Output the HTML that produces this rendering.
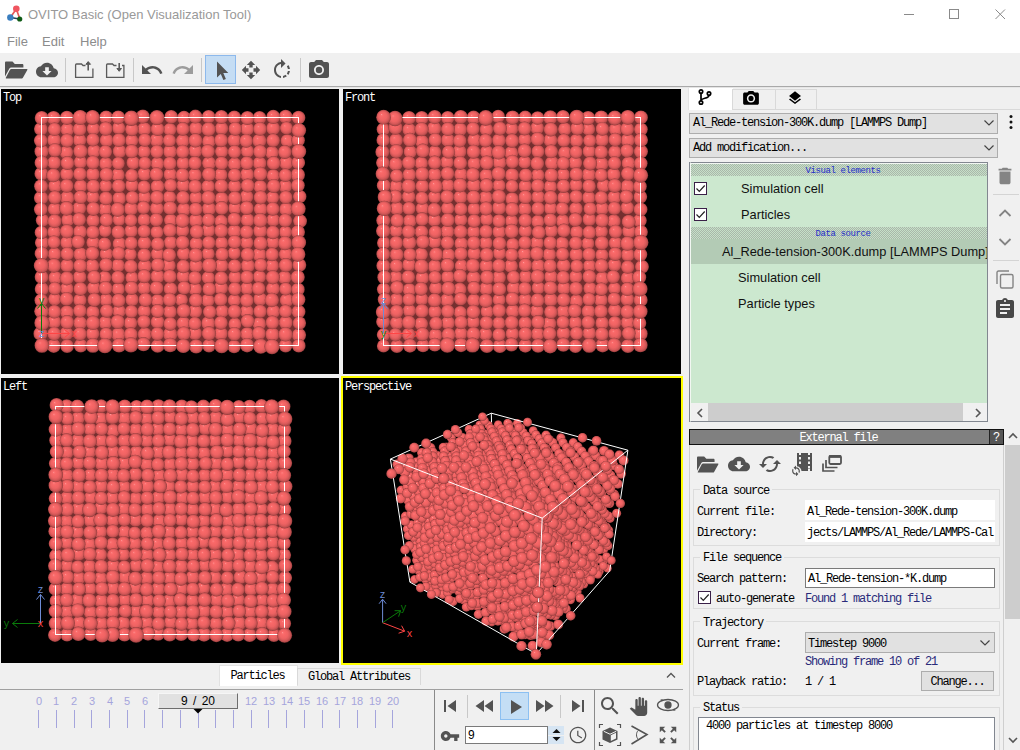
<!DOCTYPE html>
<html><head><meta charset="utf-8"><title>OVITO</title>
<style>
*{box-sizing:border-box;margin:0;padding:0}
html,body{width:1020px;height:750px;overflow:hidden;background:#f0f0f0;font-family:"Liberation Sans",sans-serif;font-size:13px;color:#000}
.a{position:absolute}
.mono{font-family:"Liberation Mono",monospace;font-size:12px;letter-spacing:-1.2px;white-space:pre;line-height:12px}
.ic{position:absolute;fill:#535353}
.vp{position:absolute;background:#000;overflow:hidden}
.vl{position:absolute;left:2px;top:3px;color:#fff}
.sep{position:absolute;width:1px;background:#c8c8c8}
.grp{position:absolute;border:1px solid #dcdcdc}
.lbl{position:absolute;background:#f0f0f0;padding:0 3px}
.tk{position:absolute;width:1px;height:18px;top:710px;background:#a5a5dc}
.tn{position:absolute;top:695px;width:20px;text-align:center;color:#a5a5dc;font-size:11px;line-height:12px}
</style></head><body>
<!-- title + menu -->
<div class="a" style="left:0;top:0;width:1020px;height:53px;background:#fff"></div>
<svg class="a" style="left:6px;top:5px" width="18" height="18" viewBox="0 0 18 18">
<path d="M10.300 4L4.500 12.300M10.300 4L13.700 13.500" stroke="#e25a5a" stroke-width="1.700" fill="none"/><path d="M4.500 12.500L13.500 14" stroke="#24405a" stroke-width="1.700" fill="none"/>
<circle cx="10.300" cy="3.700" r="3.300" fill="#f05560"/><circle cx="4.300" cy="12.500" r="3.200" fill="#3a7ebf"/><circle cx="13.700" cy="14" r="2.600" fill="#0d5a14"/>
</svg>
<div class="a" style="left:28px;top:7px;font-size:13px;line-height:16px;color:#999">OVITO Basic (Open Visualization Tool)</div>
<svg class="a" style="left:900px;top:5px" width="110" height="20" viewBox="0 0 110 20" fill="none" stroke="#8a8a8a" stroke-width="1">
<path d="M4 9.5H14"/><rect x="49.5" y="4.5" width="9" height="9"/><path d="M95.5 4.5L105 14M105 4.5L95.5 14"/></svg>
<div class="a" style="left:7px;top:34px;font-size:13px;line-height:16px;color:#8c8c8c;white-space:pre">File</div>
<div class="a" style="left:42px;top:34px;font-size:13px;line-height:16px;color:#8c8c8c">Edit</div>
<div class="a" style="left:80px;top:34px;font-size:13px;line-height:16px;color:#8c8c8c">Help</div>
<!-- toolbar -->
<div class="a" style="left:0;top:86px;width:1020px;height:1px;background:#a9a9a9"></div>
<div class="a" style="left:0;top:87px;width:1020px;height:1px;background:#e6e6e6"></div>
<svg class="ic" style="left:4px;top:59px" width="24" height="22" viewBox="0 0 24 22"><path d="M2.2 2.5h6.3l2.3 2.6h7.4c.7 0 1.2.5 1.2 1.2v2.2H7.3c-.8 0-1.5.4-1.9 1.1L1 17.5V3.7c0-.7.5-1.2 1.2-1.2z"/><path d="M7.4 10h15.4c.5 0 .8.5.5.9l-4.4 7.9c-.2.4-.6.7-1.1.7H2.2c-.4 0-.6-.4-.4-.7L6 10.800c.3-.5.8-.8 1.400-.8z"/></svg>
<svg class="ic" style="left:36px;top:59px" width="22" height="22" viewBox="0 0 24 24"><path d="M19.35 10.040C18.670 6.590 15.640 4 12 4 9.110 4 6.600 5.640 5.350 8.040 2.340 8.360 0 10.910 0 14c0 3.310 2.690 6 6 6h13c2.760 0 5-2.240 5-5 0-2.640-2.050-4.780-4.650-4.960zM17 13l-5 5-5-5h3V9h4v4h3z"/></svg>
<div class="sep" style="left:65px;top:58px;height:24px"></div>
<svg class="ic" style="fill:none;left:73px;top:58px" width="24" height="24" viewBox="0 0 24 24" stroke="#5a5a5a" stroke-width="1.300"><path d="M12.500 7.500H10L8.500 6H3.500C2.900 6 2.600 6.300 2.600 6.900V19.400H19.900V10.500"/><path d="M15.200 12.500V4" stroke-width="1.600"/><path d="M12.900 6.300L15.200 3.600 17.500 6.300z" stroke-width="1" fill="#5a5a5a"/></svg>
<svg class="ic" style="fill:none;left:104px;top:58px" width="24" height="24" viewBox="0 0 24 24" stroke="#5a5a5a" stroke-width="1.300"><path d="M12.500 7.500H10L8.500 6H3.500C2.900 6 2.600 6.300 2.600 6.900V19.400H19.900V7.500H18"/><path d="M15.200 5V12.500" stroke-width="1.600"/><path d="M12.900 10.500L15.200 13.300 17.500 10.500z" stroke-width="1" fill="#5a5a5a"/></svg>
<div class="sep" style="left:133px;top:58px;height:24px"></div>
<svg class="ic" style="left:140px;top:58px" width="24" height="24" viewBox="0 0 24 24"><path d="M12.500 8c-2.650 0-5.050.990-6.900 2.600L2 7v9h9l-3.620-3.620c1.390-1.160 3.160-1.880 5.120-1.880 3.540 0 6.550 2.310 7.600 5.500l2.370-.78C21.080 11.030 17.150 8 12.500 8z"/></svg>
<svg class="ic" style="left:171px;top:58px;fill:#9c9c9c" width="24" height="24" viewBox="0 0 24 24"><path d="M18.400 10.600C16.550 8.990 14.150 8 11.500 8c-4.650 0-8.580 3.030-9.960 7.220L3.900 16c1.050-3.190 4.050-5.500 7.600-5.500 1.950 0 3.730.720 5.120 1.880L13 16h9V7l-3.600 3.600z"/></svg>
<div class="sep" style="left:201px;top:58px;height:24px"></div>
<div class="a" style="left:205px;top:55px;width:31px;height:29px;background:#c5ddf4;border:1px solid #8db9ec"></div>
<svg class="ic" style="left:214px;top:60px" width="16" height="22" viewBox="0 0 16 22"><path d="M3 1.500V17.500L6.800 13.900 9.400 20 11.900 18.900 9.300 13H14.300z"/></svg>
<svg class="ic" style="left:241px;top:60px" width="20" height="20" viewBox="0 0 24 24"><path d="M10 9h4V6h3l-5-5-5 5h3v3zm-1 1H6V7l-5 5 5 5v-3h3v-4zm14 2l-5-5v3h-3v4h3v3l5-5zm-9 3h-4v3H7l5 5 5-5h-3v-3z"/></svg>
<svg class="ic" style="left:270px;top:58px" width="24" height="24" viewBox="0 0 24 24"><path d="M15.550 5.550L11 1v3.070C7.060 4.560 4 7.920 4 12s3.050 7.440 7 7.930v-2.020c-2.840-.48-5-2.940-5-5.910s2.160-5.430 5-5.910V10l4.550-4.450zM19.930 11c-.17-1.390-.72-2.730-1.620-3.890l-1.420 1.420c.54.750.88 1.600 1.020 2.470h2.020zM13 17.900v2.020c1.390-.17 2.740-.71 3.900-1.610l-1.440-1.440c-.75.540-1.590.890-2.460 1.030zm3.890-2.420l1.420 1.410c.9-1.160 1.450-2.500 1.620-3.890h-2.020c-.14.870-.48 1.720-1.020 2.480z"/></svg>
<div class="sep" style="left:300px;top:58px;height:24px"></div>
<svg class="ic" style="left:307px;top:58px" width="24" height="24" viewBox="0 0 24 24"><circle cx="12" cy="12" r="3.200"/><path d="M9 2L7.170 4H4c-1.100 0-2 .9-2 2v12c0 1.100.9 2 2 2h16c1.100 0 2-.9 2-2V6c0-1.100-.9-2-2-2h-3.170L15 2H9zm3 15c-2.760 0-5-2.240-5-5s2.240-5 5-5 5 2.240 5 5-2.240 5-5 5z"/></svg>
<svg width="0" height="0" style="position:absolute"><defs>
<radialGradient id="sg" cx="0.5" cy="0.5" r="0.5" fx="0.36" fy="0.32">
<stop offset="0" stop-color="#ff9c9c"/><stop offset="0.1" stop-color="#fb7272"/><stop offset="0.22" stop-color="#f96868"/><stop offset="0.55" stop-color="#ef6363"/><stop offset="0.75" stop-color="#d95a5a"/><stop offset="0.9" stop-color="#bb4d4d"/><stop offset="1" stop-color="#8a3838"/>
</radialGradient></defs></svg>

<div class="vp" style="left:1px;top:89px;width:338px;height:285px">
<svg width="338" height="285" viewBox="0 0 338 285" style="position:absolute;left:0;top:0"><g fill="url(#sg)">
<rect x="40.5" y="28.5" width="257" height="228" fill="#742f2f"/>
<circle cx="52.6" cy="29" r="7.1"/>
<circle cx="79.2" cy="28.5" r="7.1"/>
<circle cx="105.1" cy="28.5" r="7"/>
<circle cx="130.3" cy="29.2" r="7.2"/>
<circle cx="155.9" cy="28.6" r="7"/>
<circle cx="183" cy="28.9" r="7.1"/>
<circle cx="207.6" cy="27.8" r="6.9"/>
<circle cx="233.3" cy="28.5" r="6.9"/>
<circle cx="258.5" cy="28.9" r="6.9"/>
<circle cx="284.6" cy="27.8" r="7"/>
<circle cx="39.9" cy="40" r="6.9"/>
<circle cx="66.3" cy="40.6" r="7"/>
<circle cx="92.4" cy="39.7" r="6.8"/>
<circle cx="117.7" cy="39" r="6.8"/>
<circle cx="143.3" cy="40.1" r="7.1"/>
<circle cx="168.9" cy="40.5" r="6.7"/>
<circle cx="194.9" cy="39.5" r="7.1"/>
<circle cx="220.6" cy="39.4" r="6.8"/>
<circle cx="246.2" cy="39.8" r="7.1"/>
<circle cx="272.1" cy="39.3" r="7.1"/>
<circle cx="297.8" cy="41.3" r="6.8"/>
<circle cx="53.1" cy="51.1" r="7.1"/>
<circle cx="78.6" cy="51.1" r="6.9"/>
<circle cx="105.6" cy="51.3" r="7"/>
<circle cx="130.7" cy="51.5" r="6.8"/>
<circle cx="155.7" cy="51.1" r="7.2"/>
<circle cx="181.8" cy="51.8" r="7"/>
<circle cx="207.9" cy="52.4" r="7"/>
<circle cx="233.3" cy="51.3" r="7"/>
<circle cx="258.3" cy="51.7" r="7.2"/>
<circle cx="286.2" cy="51.8" r="6.8"/>
<circle cx="40.6" cy="62.4" r="7.2"/>
<circle cx="65.3" cy="63.3" r="7"/>
<circle cx="93" cy="62.1" r="7.1"/>
<circle cx="118.6" cy="62.2" r="7"/>
<circle cx="143" cy="62.6" r="6.8"/>
<circle cx="169" cy="62.5" r="7.1"/>
<circle cx="194.4" cy="62" r="7.1"/>
<circle cx="220.6" cy="62.5" r="6.7"/>
<circle cx="246.5" cy="62.3" r="6.8"/>
<circle cx="270.9" cy="63.7" r="6.9"/>
<circle cx="297.7" cy="62.5" r="7"/>
<circle cx="53.1" cy="73.6" r="7"/>
<circle cx="79.4" cy="73.1" r="6.8"/>
<circle cx="104.7" cy="74.6" r="6.9"/>
<circle cx="132.2" cy="73.7" r="6.9"/>
<circle cx="156.5" cy="74.6" r="6.9"/>
<circle cx="182.1" cy="74.2" r="6.9"/>
<circle cx="208.1" cy="74.2" r="7.1"/>
<circle cx="233.6" cy="75.1" r="7"/>
<circle cx="258.6" cy="74.2" r="7"/>
<circle cx="285.2" cy="73.9" r="7.2"/>
<circle cx="40.4" cy="84.7" r="7"/>
<circle cx="65.8" cy="85" r="6.9"/>
<circle cx="91.8" cy="85.2" r="7.1"/>
<circle cx="116.9" cy="85.9" r="7"/>
<circle cx="143.4" cy="84.9" r="7.1"/>
<circle cx="169.3" cy="85.5" r="6.9"/>
<circle cx="193.8" cy="86" r="7.1"/>
<circle cx="219.8" cy="85.8" r="6.9"/>
<circle cx="246.1" cy="85.5" r="7.2"/>
<circle cx="272.2" cy="86.7" r="6.7"/>
<circle cx="296.8" cy="85.8" r="7.2"/>
<circle cx="54.2" cy="96.9" r="7.1"/>
<circle cx="79.7" cy="97.2" r="6.9"/>
<circle cx="104.6" cy="96.8" r="6.7"/>
<circle cx="130.9" cy="96.1" r="6.9"/>
<circle cx="156.5" cy="97.4" r="7.1"/>
<circle cx="182.3" cy="96.2" r="7"/>
<circle cx="207.2" cy="97.4" r="7"/>
<circle cx="233.6" cy="97.1" r="6.9"/>
<circle cx="259.2" cy="97.7" r="6.9"/>
<circle cx="284.3" cy="97.2" r="7"/>
<circle cx="40.1" cy="108.9" r="7.2"/>
<circle cx="66.2" cy="108.8" r="7.3"/>
<circle cx="91.6" cy="107.9" r="7"/>
<circle cx="118.3" cy="109.3" r="7"/>
<circle cx="143.4" cy="108.3" r="7"/>
<circle cx="168.5" cy="108.3" r="6.8"/>
<circle cx="194.9" cy="108.6" r="6.9"/>
<circle cx="220.6" cy="109.7" r="7"/>
<circle cx="245.6" cy="107.6" r="7"/>
<circle cx="271.6" cy="108.6" r="6.7"/>
<circle cx="298.7" cy="107.5" r="6.8"/>
<circle cx="53.7" cy="120" r="7"/>
<circle cx="78.3" cy="119.2" r="7"/>
<circle cx="104.2" cy="120.2" r="7.1"/>
<circle cx="130" cy="119.7" r="7.2"/>
<circle cx="155.8" cy="119.4" r="7.1"/>
<circle cx="182.9" cy="120.4" r="7.1"/>
<circle cx="208" cy="119.7" r="7.2"/>
<circle cx="233.9" cy="119.1" r="6.9"/>
<circle cx="259.7" cy="120.1" r="7"/>
<circle cx="285.1" cy="120.3" r="7.1"/>
<circle cx="41.5" cy="131.2" r="6.7"/>
<circle cx="66.7" cy="131.1" r="6.7"/>
<circle cx="92.1" cy="131.5" r="6.9"/>
<circle cx="118.1" cy="130.6" r="6.6"/>
<circle cx="143.1" cy="130.9" r="6.8"/>
<circle cx="169.7" cy="131.3" r="6.8"/>
<circle cx="194.9" cy="131.3" r="7.3"/>
<circle cx="220.1" cy="132.3" r="6.8"/>
<circle cx="246.6" cy="131" r="7.1"/>
<circle cx="272.2" cy="130.9" r="6.9"/>
<circle cx="299" cy="132.1" r="7"/>
<circle cx="53.1" cy="143" r="6.9"/>
<circle cx="79.1" cy="142.7" r="7.1"/>
<circle cx="104" cy="141.5" r="6.8"/>
<circle cx="130.1" cy="141.9" r="6.9"/>
<circle cx="155.9" cy="143.1" r="6.7"/>
<circle cx="181.4" cy="141.4" r="7"/>
<circle cx="207.5" cy="141.3" r="7.1"/>
<circle cx="233.4" cy="142.2" r="7.1"/>
<circle cx="259.2" cy="141.9" r="7.2"/>
<circle cx="284.4" cy="143" r="6.6"/>
<circle cx="41" cy="153.7" r="7.1"/>
<circle cx="65.9" cy="153.6" r="6.9"/>
<circle cx="92.1" cy="153.6" r="6.9"/>
<circle cx="118.5" cy="154.8" r="7"/>
<circle cx="143.4" cy="153.9" r="7.1"/>
<circle cx="169.6" cy="153.5" r="6.9"/>
<circle cx="195.2" cy="154.6" r="7"/>
<circle cx="220.6" cy="154" r="6.8"/>
<circle cx="245.8" cy="153.6" r="6.8"/>
<circle cx="271.9" cy="153.2" r="6.9"/>
<circle cx="297.7" cy="153.6" r="6.9"/>
<circle cx="53.5" cy="165" r="6.9"/>
<circle cx="79.5" cy="165.4" r="7.2"/>
<circle cx="105.3" cy="164.9" r="6.8"/>
<circle cx="129.2" cy="165.2" r="6.7"/>
<circle cx="156.6" cy="164.9" r="6.9"/>
<circle cx="182.7" cy="164.6" r="7"/>
<circle cx="207.2" cy="164.7" r="6.7"/>
<circle cx="233.2" cy="163.9" r="6.7"/>
<circle cx="258.4" cy="165.6" r="7.3"/>
<circle cx="284.8" cy="165.3" r="7"/>
<circle cx="40.4" cy="176.6" r="7.1"/>
<circle cx="66.1" cy="176.5" r="7.1"/>
<circle cx="91.2" cy="176.9" r="7.2"/>
<circle cx="117.1" cy="176.5" r="7"/>
<circle cx="143.7" cy="177" r="7.2"/>
<circle cx="167.8" cy="176.4" r="7.1"/>
<circle cx="194.9" cy="176.7" r="7.2"/>
<circle cx="220.4" cy="176.5" r="7.1"/>
<circle cx="246.9" cy="176.7" r="7.2"/>
<circle cx="271.2" cy="176.8" r="7"/>
<circle cx="298.3" cy="176" r="7"/>
<circle cx="54.3" cy="188.8" r="7.1"/>
<circle cx="78.7" cy="187.9" r="6.9"/>
<circle cx="103.6" cy="188.5" r="6.8"/>
<circle cx="130.9" cy="188.7" r="6.7"/>
<circle cx="156.6" cy="187.3" r="7.3"/>
<circle cx="182.3" cy="187.3" r="7"/>
<circle cx="207.3" cy="188.7" r="6.8"/>
<circle cx="234" cy="188.2" r="6.9"/>
<circle cx="258.5" cy="187.7" r="6.8"/>
<circle cx="283.6" cy="188.5" r="7"/>
<circle cx="40.8" cy="199.9" r="7.1"/>
<circle cx="65.8" cy="199.7" r="6.9"/>
<circle cx="92.9" cy="199" r="7.1"/>
<circle cx="117.3" cy="200" r="6.8"/>
<circle cx="143.1" cy="198.9" r="7.1"/>
<circle cx="169.5" cy="199.9" r="7"/>
<circle cx="194.1" cy="200" r="7"/>
<circle cx="219.9" cy="198.9" r="7.3"/>
<circle cx="246" cy="199.3" r="6.9"/>
<circle cx="272" cy="199.6" r="7.1"/>
<circle cx="296.9" cy="200.4" r="6.8"/>
<circle cx="53.7" cy="210.1" r="6.7"/>
<circle cx="78.9" cy="211.1" r="6.8"/>
<circle cx="105" cy="210.8" r="6.9"/>
<circle cx="131" cy="210.6" r="6.9"/>
<circle cx="156.5" cy="211.7" r="6.8"/>
<circle cx="180.5" cy="210.8" r="6.6"/>
<circle cx="206.9" cy="211.4" r="6.9"/>
<circle cx="233.3" cy="211.3" r="6.7"/>
<circle cx="259.2" cy="210.1" r="7.1"/>
<circle cx="285.7" cy="211.2" r="7.1"/>
<circle cx="40.5" cy="222.2" r="6.8"/>
<circle cx="65.9" cy="223.2" r="7"/>
<circle cx="91.8" cy="223.1" r="6.9"/>
<circle cx="118.1" cy="222.2" r="6.9"/>
<circle cx="143.2" cy="222.2" r="6.9"/>
<circle cx="169" cy="222.7" r="7"/>
<circle cx="194.2" cy="222.2" r="7.1"/>
<circle cx="221.1" cy="222.2" r="6.9"/>
<circle cx="245.8" cy="222.5" r="7.1"/>
<circle cx="272.3" cy="222.4" r="7.1"/>
<circle cx="297.5" cy="222.7" r="7"/>
<circle cx="53.2" cy="232.8" r="7.1"/>
<circle cx="79.2" cy="233.9" r="7"/>
<circle cx="104.4" cy="233.7" r="7.1"/>
<circle cx="129.5" cy="234" r="6.9"/>
<circle cx="156.6" cy="232.9" r="7.1"/>
<circle cx="182.5" cy="234.2" r="7"/>
<circle cx="207.3" cy="234.2" r="7.2"/>
<circle cx="233.9" cy="235.1" r="6.7"/>
<circle cx="258.3" cy="234.8" r="7"/>
<circle cx="284.8" cy="233.6" r="7.1"/>
<circle cx="39.6" cy="244.7" r="7.2"/>
<circle cx="65.4" cy="244.5" r="7.1"/>
<circle cx="91.6" cy="244.7" r="6.9"/>
<circle cx="117.4" cy="245.5" r="7.3"/>
<circle cx="143.8" cy="245.3" r="7.2"/>
<circle cx="169.2" cy="245.3" r="7.4"/>
<circle cx="194" cy="244.2" r="7.1"/>
<circle cx="219.9" cy="244.5" r="7.1"/>
<circle cx="246.2" cy="245" r="7"/>
<circle cx="271.4" cy="245.4" r="7.2"/>
<circle cx="297.9" cy="246.1" r="7.2"/>
<circle cx="52.7" cy="256.8" r="7.1"/>
<circle cx="79.7" cy="256.5" r="7"/>
<circle cx="103.9" cy="256.6" r="7.2"/>
<circle cx="129.9" cy="255.8" r="7.1"/>
<circle cx="156.6" cy="256.9" r="6.9"/>
<circle cx="182.3" cy="256.9" r="6.7"/>
<circle cx="208" cy="256.5" r="6.9"/>
<circle cx="233.1" cy="257.4" r="6.8"/>
<circle cx="259.7" cy="257.2" r="7.1"/>
<circle cx="284.6" cy="256.5" r="6.9"/>
<circle cx="40.7" cy="29" r="7"/>
<circle cx="65.9" cy="28.8" r="7.1"/>
<circle cx="91.5" cy="28.4" r="6.9"/>
<circle cx="117.2" cy="28.4" r="7"/>
<circle cx="141.8" cy="27.5" r="7"/>
<circle cx="170.2" cy="27.9" r="6.9"/>
<circle cx="194.4" cy="27.6" r="7"/>
<circle cx="220.4" cy="28" r="7"/>
<circle cx="246.4" cy="29" r="7"/>
<circle cx="272.3" cy="27.9" r="7.1"/>
<circle cx="297.5" cy="28.7" r="6.9"/>
<circle cx="53.5" cy="40.3" r="6.8"/>
<circle cx="78.6" cy="40.3" r="7"/>
<circle cx="104.7" cy="39.7" r="7.1"/>
<circle cx="130.9" cy="40.3" r="6.9"/>
<circle cx="156.6" cy="40" r="7"/>
<circle cx="181.8" cy="39.9" r="6.8"/>
<circle cx="207.5" cy="40.3" r="7.2"/>
<circle cx="234.2" cy="39.8" r="6.9"/>
<circle cx="259" cy="39.9" r="6.9"/>
<circle cx="285.5" cy="39.1" r="6.6"/>
<circle cx="39.8" cy="51.6" r="6.9"/>
<circle cx="66" cy="51.5" r="7"/>
<circle cx="91.9" cy="50.7" r="6.8"/>
<circle cx="117.9" cy="51.1" r="7"/>
<circle cx="143.8" cy="51" r="6.8"/>
<circle cx="168.4" cy="51.4" r="6.7"/>
<circle cx="194.4" cy="51.4" r="7.1"/>
<circle cx="220.1" cy="51.2" r="7"/>
<circle cx="245.2" cy="51.8" r="6.9"/>
<circle cx="272.1" cy="51.4" r="6.9"/>
<circle cx="297.1" cy="51.3" r="6.8"/>
<circle cx="53.9" cy="61.2" r="7"/>
<circle cx="79.4" cy="62.1" r="7.3"/>
<circle cx="104.4" cy="62.7" r="6.8"/>
<circle cx="130.7" cy="62.3" r="7"/>
<circle cx="155.9" cy="62.6" r="6.9"/>
<circle cx="181.7" cy="62.6" r="6.9"/>
<circle cx="206.9" cy="62.3" r="7.1"/>
<circle cx="233.5" cy="62.8" r="6.8"/>
<circle cx="259" cy="62.6" r="7"/>
<circle cx="283.8" cy="63" r="6.9"/>
<circle cx="40.6" cy="73.7" r="7.1"/>
<circle cx="66.4" cy="74" r="6.9"/>
<circle cx="91.9" cy="73.4" r="7"/>
<circle cx="117.3" cy="74.3" r="6.6"/>
<circle cx="143.8" cy="74.1" r="6.7"/>
<circle cx="168.8" cy="74.4" r="6.9"/>
<circle cx="193.9" cy="74" r="6.9"/>
<circle cx="220.5" cy="74.2" r="6.9"/>
<circle cx="245.8" cy="74" r="6.9"/>
<circle cx="272.6" cy="74.1" r="7"/>
<circle cx="297.2" cy="73.7" r="6.9"/>
<circle cx="52.4" cy="86.3" r="7"/>
<circle cx="78.9" cy="84.9" r="6.9"/>
<circle cx="105.4" cy="85.5" r="7.1"/>
<circle cx="130.7" cy="86.4" r="6.7"/>
<circle cx="155.4" cy="85.2" r="7"/>
<circle cx="181.5" cy="86" r="7"/>
<circle cx="208" cy="85.3" r="7.1"/>
<circle cx="233.6" cy="86.1" r="6.9"/>
<circle cx="259.3" cy="84.8" r="7.1"/>
<circle cx="284.4" cy="86.2" r="6.8"/>
<circle cx="40.1" cy="97.2" r="7"/>
<circle cx="65.7" cy="96.8" r="7"/>
<circle cx="92.3" cy="97.3" r="7"/>
<circle cx="117.7" cy="97" r="6.9"/>
<circle cx="143" cy="98" r="6.8"/>
<circle cx="169.6" cy="96.3" r="6.7"/>
<circle cx="194.1" cy="97.5" r="7.1"/>
<circle cx="220.3" cy="96.9" r="7"/>
<circle cx="246.7" cy="96.6" r="7"/>
<circle cx="272.8" cy="97" r="7"/>
<circle cx="296.9" cy="96.3" r="6.9"/>
<circle cx="53.8" cy="108.5" r="6.9"/>
<circle cx="79.6" cy="108.1" r="7"/>
<circle cx="104.9" cy="109.3" r="7"/>
<circle cx="131.3" cy="108.7" r="6.9"/>
<circle cx="156" cy="108.4" r="7.1"/>
<circle cx="182" cy="108.6" r="7"/>
<circle cx="207.4" cy="108.6" r="7.2"/>
<circle cx="233.8" cy="109" r="7"/>
<circle cx="259.6" cy="108.4" r="7"/>
<circle cx="284.8" cy="108.3" r="6.8"/>
<circle cx="39.8" cy="120.3" r="6.9"/>
<circle cx="65.5" cy="119.4" r="7.3"/>
<circle cx="92.3" cy="119.8" r="7.1"/>
<circle cx="116.7" cy="120.5" r="7.3"/>
<circle cx="142.5" cy="118.6" r="6.8"/>
<circle cx="169.1" cy="119" r="7.1"/>
<circle cx="194.7" cy="120.2" r="6.9"/>
<circle cx="220.7" cy="119.1" r="7"/>
<circle cx="245.7" cy="118.9" r="7.1"/>
<circle cx="271.8" cy="119.8" r="6.9"/>
<circle cx="297.2" cy="119.7" r="7"/>
<circle cx="53.6" cy="132.1" r="7.1"/>
<circle cx="78.1" cy="130.4" r="7"/>
<circle cx="105.3" cy="130.9" r="6.9"/>
<circle cx="129.9" cy="131.2" r="6.5"/>
<circle cx="155.3" cy="130.8" r="6.9"/>
<circle cx="181.4" cy="131.5" r="7.3"/>
<circle cx="207.5" cy="130.9" r="6.8"/>
<circle cx="233.3" cy="130.3" r="7"/>
<circle cx="259.3" cy="131.3" r="7.3"/>
<circle cx="284.2" cy="131.4" r="7"/>
<circle cx="40.3" cy="143.4" r="6.7"/>
<circle cx="65.9" cy="142.3" r="7.1"/>
<circle cx="91.9" cy="143.1" r="6.9"/>
<circle cx="117.3" cy="143.1" r="7"/>
<circle cx="143.1" cy="142.2" r="6.8"/>
<circle cx="168.9" cy="141.3" r="7"/>
<circle cx="195.7" cy="142.6" r="7.2"/>
<circle cx="220.2" cy="141.7" r="7.1"/>
<circle cx="245.6" cy="142.9" r="6.9"/>
<circle cx="271.9" cy="143.3" r="6.9"/>
<circle cx="296.9" cy="143.1" r="7.1"/>
<circle cx="52.9" cy="153.1" r="6.7"/>
<circle cx="77.1" cy="152.8" r="6.9"/>
<circle cx="103.5" cy="155" r="6.8"/>
<circle cx="130.1" cy="154" r="6.8"/>
<circle cx="156.7" cy="154.9" r="6.9"/>
<circle cx="181.5" cy="153.4" r="7.1"/>
<circle cx="207.7" cy="153.6" r="6.8"/>
<circle cx="233.6" cy="152.9" r="7"/>
<circle cx="259.5" cy="154.2" r="7.2"/>
<circle cx="284" cy="154.1" r="7.2"/>
<circle cx="40.6" cy="164.5" r="7"/>
<circle cx="66.3" cy="164.8" r="6.9"/>
<circle cx="91.3" cy="164.3" r="7.1"/>
<circle cx="117.6" cy="164.3" r="6.9"/>
<circle cx="143.2" cy="166.1" r="7"/>
<circle cx="168.2" cy="165.9" r="7"/>
<circle cx="194.7" cy="166.1" r="7.3"/>
<circle cx="221.1" cy="165.2" r="6.9"/>
<circle cx="246.6" cy="165.5" r="7"/>
<circle cx="271.1" cy="165.3" r="6.9"/>
<circle cx="297" cy="165.3" r="6.9"/>
<circle cx="53" cy="176.5" r="7.2"/>
<circle cx="79.2" cy="176.7" r="7"/>
<circle cx="105" cy="175.8" r="7"/>
<circle cx="129.8" cy="177.4" r="7"/>
<circle cx="156.8" cy="175.9" r="7"/>
<circle cx="182.3" cy="177.4" r="6.9"/>
<circle cx="208.4" cy="176.5" r="7.6"/>
<circle cx="233.6" cy="177" r="6.9"/>
<circle cx="259.7" cy="176" r="6.8"/>
<circle cx="284.8" cy="176.2" r="7.1"/>
<circle cx="40.6" cy="188" r="7"/>
<circle cx="65.8" cy="189.3" r="7.1"/>
<circle cx="93.1" cy="188.2" r="7"/>
<circle cx="117" cy="188.4" r="6.9"/>
<circle cx="143.2" cy="187.2" r="7"/>
<circle cx="168.8" cy="187.4" r="7"/>
<circle cx="193.9" cy="188.8" r="7"/>
<circle cx="220.2" cy="189.1" r="7"/>
<circle cx="246" cy="188.1" r="6.9"/>
<circle cx="271.8" cy="188.3" r="7.1"/>
<circle cx="296.7" cy="188.1" r="7.1"/>
<circle cx="53.8" cy="199.5" r="6.7"/>
<circle cx="79.4" cy="199.9" r="7"/>
<circle cx="104.5" cy="199.1" r="7.1"/>
<circle cx="130.5" cy="199" r="7"/>
<circle cx="155.5" cy="199" r="7.1"/>
<circle cx="183.1" cy="198.8" r="6.9"/>
<circle cx="208.2" cy="200" r="7"/>
<circle cx="233.8" cy="199.8" r="6.9"/>
<circle cx="257.6" cy="199.5" r="6.9"/>
<circle cx="284.6" cy="199.9" r="6.6"/>
<circle cx="40.3" cy="211.3" r="6.9"/>
<circle cx="65.5" cy="210" r="7"/>
<circle cx="93.3" cy="210.8" r="7"/>
<circle cx="117.6" cy="211.4" r="7.1"/>
<circle cx="144.4" cy="210.8" r="7.1"/>
<circle cx="168.7" cy="210.7" r="7"/>
<circle cx="194.9" cy="211.2" r="7.1"/>
<circle cx="219.7" cy="210.4" r="6.9"/>
<circle cx="245.8" cy="211.4" r="7"/>
<circle cx="270.9" cy="211" r="7.2"/>
<circle cx="297.2" cy="210.6" r="7.2"/>
<circle cx="53.4" cy="222.7" r="6.9"/>
<circle cx="78.9" cy="221.7" r="6.9"/>
<circle cx="105.7" cy="221.8" r="6.9"/>
<circle cx="130.4" cy="222.5" r="6.7"/>
<circle cx="156.6" cy="222" r="6.9"/>
<circle cx="182.7" cy="221.8" r="7.2"/>
<circle cx="208.7" cy="222.8" r="6.9"/>
<circle cx="233.5" cy="222.4" r="7.1"/>
<circle cx="259.1" cy="222.3" r="6.9"/>
<circle cx="284.5" cy="222.3" r="6.8"/>
<circle cx="41" cy="233.9" r="7.2"/>
<circle cx="66.1" cy="233.2" r="7.1"/>
<circle cx="92" cy="233.8" r="7.3"/>
<circle cx="116.7" cy="232.8" r="7.3"/>
<circle cx="142.9" cy="232.6" r="6.9"/>
<circle cx="169.2" cy="234.8" r="6.9"/>
<circle cx="193.8" cy="234.5" r="6.8"/>
<circle cx="219.9" cy="233.7" r="7"/>
<circle cx="246.6" cy="232.1" r="7"/>
<circle cx="271.4" cy="233.4" r="6.9"/>
<circle cx="298.3" cy="234.1" r="6.8"/>
<circle cx="53.2" cy="244.7" r="7"/>
<circle cx="78.9" cy="244.9" r="7"/>
<circle cx="105.1" cy="245.1" r="6.8"/>
<circle cx="129.8" cy="245.3" r="7"/>
<circle cx="156.4" cy="244.8" r="6.9"/>
<circle cx="182.8" cy="244.5" r="7.1"/>
<circle cx="207.9" cy="244.5" r="7.2"/>
<circle cx="233.4" cy="245" r="7"/>
<circle cx="257.9" cy="244.4" r="7.1"/>
<circle cx="284.5" cy="245.3" r="7.3"/>
<circle cx="40.9" cy="256.4" r="6.9"/>
<circle cx="66.1" cy="257" r="6.9"/>
<circle cx="91.9" cy="256.4" r="7.4"/>
<circle cx="118" cy="256.3" r="7.3"/>
<circle cx="142.5" cy="255.2" r="7.1"/>
<circle cx="169.1" cy="256" r="7.3"/>
<circle cx="195.1" cy="257.3" r="7.2"/>
<circle cx="220.7" cy="256.7" r="7"/>
<circle cx="246.1" cy="256.2" r="7.2"/>
<circle cx="271" cy="257.6" r="7.1"/>
<circle cx="297.7" cy="256.7" r="6.9"/>
</g>
<rect x="40.5" y="28.5" width="257" height="228" fill="none" stroke="#fff" stroke-width="1" shape-rendering="crispEdges"/>
<g fill="url(#sg)">
<circle cx="79.2" cy="28.5" r="7.6"/>
<circle cx="130.3" cy="29.2" r="7.7"/>
<circle cx="155.9" cy="28.6" r="7.5"/>
<circle cx="297.8" cy="41.3" r="7.3"/>
<circle cx="297.7" cy="62.5" r="7.5"/>
<circle cx="297.7" cy="153.6" r="7.4"/>
<circle cx="40.4" cy="176.6" r="7.6"/>
<circle cx="40.5" cy="222.2" r="7.3"/>
<circle cx="103.9" cy="256.6" r="7.7"/>
<circle cx="129.9" cy="255.8" r="7.6"/>
<circle cx="182.3" cy="256.9" r="7.2"/>
<circle cx="259.7" cy="257.2" r="7.6"/>
<circle cx="91.5" cy="28.4" r="7.4"/>
<circle cx="297.2" cy="119.7" r="7.5"/>
<circle cx="297" cy="165.3" r="7.4"/>
<circle cx="41" cy="233.9" r="7.7"/>
<circle cx="40.9" cy="256.4" r="7.4"/>
<circle cx="220.7" cy="256.7" r="7.5"/>
<circle cx="271" cy="257.6" r="7.6"/>
</g>
<g fill="none" stroke-width="1"><path d="M40.5 244.5V214.5M36.5 219.5L40.5 214.5L44.5 219.5" stroke="#0a7a0a"/><path d="M40.5 244.5H68.5M63.5 240.5L68.5 244.5L63.5 248.5" stroke="#ff4545"/></g><text x="37.5" y="214.5" fill="#0a7a0a" font-family="Liberation Mono" font-size="10">y</text><text x="70.5" y="247.5" fill="#ff4545" font-family="Liberation Mono" font-size="10">x</text><text x="37.5" y="247.5" fill="#6e8cd6" font-family="Liberation Mono" font-size="10">z</text>
</svg>
<div class="vl mono">Top</div></div>
<div class="vp" style="left:343px;top:89px;width:338px;height:285px">
<svg width="338" height="285" viewBox="0 0 338 285" style="position:absolute;left:0;top:0"><g fill="url(#sg)">
<rect x="40.5" y="28.5" width="257" height="228" fill="#742f2f"/>
<circle cx="52" cy="29.5" r="7.2"/>
<circle cx="78.7" cy="29" r="7"/>
<circle cx="104.7" cy="28.8" r="6.9"/>
<circle cx="130.6" cy="28.7" r="7.1"/>
<circle cx="155.2" cy="27.5" r="6.8"/>
<circle cx="182.2" cy="28.6" r="7"/>
<circle cx="207.3" cy="28.6" r="7.3"/>
<circle cx="233.8" cy="28.4" r="7.2"/>
<circle cx="258.2" cy="28.6" r="7.2"/>
<circle cx="284.8" cy="28.3" r="6.9"/>
<circle cx="40.4" cy="40.3" r="6.8"/>
<circle cx="66.2" cy="40.7" r="7"/>
<circle cx="91.2" cy="39.4" r="7.3"/>
<circle cx="117.2" cy="40.4" r="7"/>
<circle cx="143.4" cy="40.5" r="6.9"/>
<circle cx="168.5" cy="39.8" r="7"/>
<circle cx="194.2" cy="39" r="7"/>
<circle cx="221.8" cy="40.1" r="6.9"/>
<circle cx="245.6" cy="40.1" r="6.7"/>
<circle cx="272.7" cy="40.3" r="7"/>
<circle cx="297.9" cy="40.3" r="6.9"/>
<circle cx="53" cy="51.2" r="7.1"/>
<circle cx="78.8" cy="52.4" r="7"/>
<circle cx="104.9" cy="51.1" r="7.1"/>
<circle cx="131.4" cy="51.1" r="7.2"/>
<circle cx="155.9" cy="51.3" r="7"/>
<circle cx="181.8" cy="50.6" r="6.9"/>
<circle cx="207.4" cy="51.2" r="7.1"/>
<circle cx="233.4" cy="51.5" r="6.9"/>
<circle cx="259" cy="50.6" r="7.2"/>
<circle cx="284.7" cy="51.2" r="7.2"/>
<circle cx="39.4" cy="62.9" r="7.1"/>
<circle cx="67.3" cy="62.8" r="6.8"/>
<circle cx="91.6" cy="63.2" r="6.9"/>
<circle cx="116.5" cy="62.5" r="7.2"/>
<circle cx="143.7" cy="62.9" r="7"/>
<circle cx="168.3" cy="64" r="7.1"/>
<circle cx="195" cy="62.4" r="6.7"/>
<circle cx="222" cy="63.9" r="7.1"/>
<circle cx="246.2" cy="62.3" r="6.8"/>
<circle cx="271.9" cy="63.2" r="6.9"/>
<circle cx="297.9" cy="62.6" r="7.1"/>
<circle cx="52.7" cy="75.1" r="7.1"/>
<circle cx="78.3" cy="74.3" r="6.8"/>
<circle cx="104" cy="73.2" r="6.9"/>
<circle cx="131.3" cy="74.5" r="7"/>
<circle cx="156.5" cy="73.4" r="7.1"/>
<circle cx="181.6" cy="73" r="6.8"/>
<circle cx="209" cy="73.9" r="7.2"/>
<circle cx="232.2" cy="73.7" r="7.1"/>
<circle cx="258.5" cy="74.9" r="7.2"/>
<circle cx="285.5" cy="74.3" r="7"/>
<circle cx="39.8" cy="84.8" r="6.7"/>
<circle cx="66.3" cy="85.7" r="6.9"/>
<circle cx="91.6" cy="85.6" r="7.1"/>
<circle cx="118" cy="85.5" r="7"/>
<circle cx="143.3" cy="86.5" r="7"/>
<circle cx="169" cy="86.1" r="7.1"/>
<circle cx="194.9" cy="86.1" r="6.8"/>
<circle cx="220.3" cy="85.7" r="6.8"/>
<circle cx="245.8" cy="85.7" r="7.2"/>
<circle cx="270.6" cy="85.4" r="7"/>
<circle cx="297.6" cy="86.2" r="7"/>
<circle cx="53.1" cy="97.3" r="6.9"/>
<circle cx="79.3" cy="97.1" r="6.9"/>
<circle cx="104.9" cy="96.4" r="6.9"/>
<circle cx="130.9" cy="96.2" r="7.3"/>
<circle cx="156.1" cy="96.5" r="6.7"/>
<circle cx="182.2" cy="97.2" r="6.9"/>
<circle cx="207.4" cy="97.6" r="6.8"/>
<circle cx="233" cy="96.1" r="6.9"/>
<circle cx="260.6" cy="96.6" r="7"/>
<circle cx="284.4" cy="97.6" r="7.2"/>
<circle cx="42" cy="108.1" r="6.9"/>
<circle cx="65.7" cy="107.6" r="6.9"/>
<circle cx="91.6" cy="107.8" r="6.8"/>
<circle cx="117.5" cy="108" r="7.1"/>
<circle cx="142.8" cy="108.6" r="7.1"/>
<circle cx="169.1" cy="110" r="6.9"/>
<circle cx="195.2" cy="107.9" r="7"/>
<circle cx="221" cy="108.8" r="7"/>
<circle cx="245.8" cy="108.7" r="6.9"/>
<circle cx="271.4" cy="108.2" r="7.1"/>
<circle cx="297.3" cy="107.8" r="6.9"/>
<circle cx="53.8" cy="119.5" r="7.1"/>
<circle cx="79.5" cy="119.5" r="6.9"/>
<circle cx="104.7" cy="119.3" r="6.8"/>
<circle cx="131.1" cy="120.1" r="6.9"/>
<circle cx="156.1" cy="118.8" r="7.2"/>
<circle cx="181.7" cy="119.9" r="7.1"/>
<circle cx="207.6" cy="119.3" r="6.9"/>
<circle cx="232.9" cy="119.7" r="7"/>
<circle cx="259" cy="119.4" r="7.1"/>
<circle cx="284.3" cy="118.7" r="6.9"/>
<circle cx="40.3" cy="131.4" r="7.1"/>
<circle cx="66.9" cy="131.9" r="6.9"/>
<circle cx="91.4" cy="131" r="6.9"/>
<circle cx="117.7" cy="130.8" r="6.8"/>
<circle cx="143.6" cy="130.3" r="6.8"/>
<circle cx="168.5" cy="132" r="6.7"/>
<circle cx="194.8" cy="132.5" r="6.8"/>
<circle cx="219.7" cy="132" r="7"/>
<circle cx="246.3" cy="130.3" r="7"/>
<circle cx="270.8" cy="132.1" r="7"/>
<circle cx="296.8" cy="131.6" r="7"/>
<circle cx="53.1" cy="141.7" r="6.9"/>
<circle cx="78.5" cy="142.8" r="6.9"/>
<circle cx="104.4" cy="142.6" r="7.1"/>
<circle cx="130.6" cy="142.8" r="6.9"/>
<circle cx="156.2" cy="142.8" r="7"/>
<circle cx="182.3" cy="141.9" r="6.9"/>
<circle cx="208.2" cy="141.7" r="7"/>
<circle cx="233.7" cy="143.1" r="6.9"/>
<circle cx="258.2" cy="142.5" r="6.9"/>
<circle cx="286" cy="142.2" r="7.1"/>
<circle cx="40.8" cy="153.9" r="6.8"/>
<circle cx="66.3" cy="153.6" r="7.2"/>
<circle cx="91.5" cy="152.5" r="7.1"/>
<circle cx="118.2" cy="154.6" r="7"/>
<circle cx="142.9" cy="153.9" r="6.9"/>
<circle cx="169.7" cy="155.4" r="6.7"/>
<circle cx="194" cy="153.9" r="7"/>
<circle cx="219.1" cy="154.5" r="7"/>
<circle cx="244.9" cy="154.4" r="6.7"/>
<circle cx="272.5" cy="154" r="6.9"/>
<circle cx="297.8" cy="153.5" r="7.2"/>
<circle cx="53.7" cy="165.5" r="7.1"/>
<circle cx="78.1" cy="165.4" r="7"/>
<circle cx="105.3" cy="165.9" r="7"/>
<circle cx="131.1" cy="164.5" r="7.1"/>
<circle cx="156.5" cy="164.1" r="6.8"/>
<circle cx="181.5" cy="165.1" r="7.2"/>
<circle cx="206.4" cy="165.5" r="6.9"/>
<circle cx="233.3" cy="165.5" r="7.2"/>
<circle cx="258.9" cy="165.9" r="6.7"/>
<circle cx="284.8" cy="165.8" r="7"/>
<circle cx="40.4" cy="176.8" r="7.1"/>
<circle cx="66.1" cy="175.7" r="7.1"/>
<circle cx="91.7" cy="177.4" r="7.1"/>
<circle cx="118.4" cy="176.9" r="6.8"/>
<circle cx="143.5" cy="176.9" r="7.2"/>
<circle cx="168" cy="177" r="7.1"/>
<circle cx="195.2" cy="176.9" r="7.2"/>
<circle cx="220.6" cy="176.4" r="7.1"/>
<circle cx="246.6" cy="176.9" r="6.8"/>
<circle cx="271.6" cy="175.8" r="7"/>
<circle cx="298.9" cy="177.7" r="7"/>
<circle cx="52.9" cy="188.1" r="6.8"/>
<circle cx="79.4" cy="188.8" r="7"/>
<circle cx="104.9" cy="188.1" r="7"/>
<circle cx="130.6" cy="188.8" r="7.2"/>
<circle cx="156" cy="188.4" r="7.1"/>
<circle cx="182.6" cy="187.7" r="7"/>
<circle cx="207.9" cy="187.8" r="7"/>
<circle cx="232.8" cy="187.7" r="6.9"/>
<circle cx="259.2" cy="189.4" r="7.1"/>
<circle cx="284.8" cy="189" r="7.1"/>
<circle cx="40.7" cy="200.2" r="6.8"/>
<circle cx="66.4" cy="200.8" r="6.9"/>
<circle cx="92.8" cy="199.1" r="6.9"/>
<circle cx="116.8" cy="200.4" r="6.9"/>
<circle cx="143.2" cy="199.6" r="7.2"/>
<circle cx="170.7" cy="199.1" r="7.2"/>
<circle cx="195.3" cy="198.8" r="6.8"/>
<circle cx="220.9" cy="199.1" r="7.1"/>
<circle cx="247.1" cy="199.5" r="6.9"/>
<circle cx="271.5" cy="199.3" r="6.6"/>
<circle cx="297" cy="199.9" r="7.1"/>
<circle cx="53.4" cy="210.8" r="7"/>
<circle cx="78.7" cy="210.1" r="6.8"/>
<circle cx="104.2" cy="211.1" r="7.1"/>
<circle cx="130.9" cy="211.4" r="7"/>
<circle cx="156.1" cy="210.8" r="6.7"/>
<circle cx="182.2" cy="210.9" r="7.2"/>
<circle cx="207.7" cy="210.7" r="7.2"/>
<circle cx="233.3" cy="212.1" r="7"/>
<circle cx="257.9" cy="211" r="7"/>
<circle cx="284.3" cy="210.2" r="7"/>
<circle cx="40.1" cy="223" r="6.8"/>
<circle cx="66.4" cy="221.6" r="6.8"/>
<circle cx="91.9" cy="222.6" r="7"/>
<circle cx="117.3" cy="223.4" r="6.7"/>
<circle cx="144.1" cy="222.6" r="6.8"/>
<circle cx="169.8" cy="222" r="7.1"/>
<circle cx="193.8" cy="222" r="7"/>
<circle cx="220.5" cy="222.5" r="7.1"/>
<circle cx="245.5" cy="222.4" r="7.1"/>
<circle cx="271.8" cy="221.4" r="7"/>
<circle cx="297.2" cy="222.4" r="6.9"/>
<circle cx="53.8" cy="233.7" r="7"/>
<circle cx="78.2" cy="234.8" r="7"/>
<circle cx="105.1" cy="233.8" r="7.1"/>
<circle cx="130.2" cy="232.9" r="6.9"/>
<circle cx="155.9" cy="234.1" r="6.7"/>
<circle cx="182.1" cy="234.1" r="7"/>
<circle cx="206.3" cy="234.6" r="7.2"/>
<circle cx="232.3" cy="233.7" r="7"/>
<circle cx="259.1" cy="234" r="6.9"/>
<circle cx="284.7" cy="233.6" r="7.1"/>
<circle cx="40.6" cy="245.7" r="6.8"/>
<circle cx="65.6" cy="245.4" r="6.9"/>
<circle cx="92.4" cy="246.2" r="7"/>
<circle cx="117.8" cy="244.5" r="6.9"/>
<circle cx="142.5" cy="244.9" r="6.9"/>
<circle cx="169.4" cy="244.7" r="6.9"/>
<circle cx="194.7" cy="244.9" r="6.9"/>
<circle cx="220.4" cy="244.2" r="7.1"/>
<circle cx="246.3" cy="244.1" r="6.9"/>
<circle cx="272" cy="244.6" r="6.9"/>
<circle cx="297.5" cy="244.7" r="7.2"/>
<circle cx="53.9" cy="257.1" r="6.9"/>
<circle cx="80" cy="256.5" r="6.8"/>
<circle cx="104.3" cy="256.1" r="7.2"/>
<circle cx="129.5" cy="256.1" r="7"/>
<circle cx="156.8" cy="256.9" r="7.2"/>
<circle cx="182.3" cy="256.6" r="7.1"/>
<circle cx="207.1" cy="257.1" r="6.8"/>
<circle cx="232.4" cy="257.2" r="6.8"/>
<circle cx="259.6" cy="256.2" r="7.2"/>
<circle cx="284.9" cy="257" r="7"/>
<circle cx="40.6" cy="28.2" r="6.9"/>
<circle cx="66" cy="28.9" r="7"/>
<circle cx="91.7" cy="28.1" r="7.1"/>
<circle cx="117.7" cy="28" r="7.1"/>
<circle cx="142.7" cy="28.9" r="7.3"/>
<circle cx="169.5" cy="28.6" r="7.2"/>
<circle cx="194.6" cy="29" r="6.8"/>
<circle cx="220" cy="27.9" r="6.9"/>
<circle cx="245.1" cy="29.1" r="7.2"/>
<circle cx="271.8" cy="29" r="7.4"/>
<circle cx="297.9" cy="28.4" r="7"/>
<circle cx="52.5" cy="38.6" r="7.2"/>
<circle cx="78.6" cy="40.2" r="7"/>
<circle cx="104.9" cy="40.1" r="7"/>
<circle cx="130" cy="39.8" r="6.9"/>
<circle cx="156.9" cy="39.5" r="7"/>
<circle cx="181.6" cy="39.5" r="6.9"/>
<circle cx="207.8" cy="40.4" r="7.1"/>
<circle cx="234.3" cy="39.3" r="7.1"/>
<circle cx="259.4" cy="39.8" r="6.9"/>
<circle cx="284.2" cy="39.9" r="7"/>
<circle cx="40.2" cy="51" r="6.8"/>
<circle cx="66.9" cy="50.9" r="7.1"/>
<circle cx="92.2" cy="50.8" r="6.9"/>
<circle cx="116.7" cy="51.7" r="6.9"/>
<circle cx="142.5" cy="51.5" r="6.9"/>
<circle cx="169.1" cy="51.7" r="7.1"/>
<circle cx="194.6" cy="50.1" r="7.1"/>
<circle cx="220.8" cy="51.4" r="6.8"/>
<circle cx="246.7" cy="51.6" r="6.7"/>
<circle cx="272.2" cy="50.7" r="6.9"/>
<circle cx="297.9" cy="51.1" r="7.1"/>
<circle cx="53.3" cy="62.3" r="7.1"/>
<circle cx="79.8" cy="61.7" r="7.1"/>
<circle cx="105.5" cy="62.9" r="6.7"/>
<circle cx="130.5" cy="62.7" r="7"/>
<circle cx="155.6" cy="63.4" r="7.2"/>
<circle cx="181.6" cy="61.7" r="7.1"/>
<circle cx="208.2" cy="62.4" r="6.9"/>
<circle cx="233" cy="63.1" r="6.7"/>
<circle cx="258.1" cy="63" r="7"/>
<circle cx="284" cy="61.7" r="6.9"/>
<circle cx="39.9" cy="73.8" r="6.9"/>
<circle cx="65.8" cy="73.7" r="7"/>
<circle cx="91.7" cy="73.5" r="6.9"/>
<circle cx="117.2" cy="73.9" r="7"/>
<circle cx="143.7" cy="73.7" r="7.2"/>
<circle cx="169.4" cy="72.6" r="6.9"/>
<circle cx="194.2" cy="74.4" r="7"/>
<circle cx="220.4" cy="74.2" r="6.8"/>
<circle cx="247" cy="74.4" r="7.1"/>
<circle cx="271.5" cy="74.1" r="6.9"/>
<circle cx="297.7" cy="74.3" r="6.9"/>
<circle cx="53.6" cy="86.7" r="6.7"/>
<circle cx="79.2" cy="84.9" r="7.2"/>
<circle cx="104.5" cy="84.5" r="6.9"/>
<circle cx="129.9" cy="85.6" r="7.1"/>
<circle cx="155.6" cy="84.6" r="7.2"/>
<circle cx="182.7" cy="86.2" r="6.9"/>
<circle cx="208.3" cy="86.2" r="7.1"/>
<circle cx="233.3" cy="85.2" r="7"/>
<circle cx="258.2" cy="86" r="6.7"/>
<circle cx="284.9" cy="84.6" r="7"/>
<circle cx="40.8" cy="96.4" r="7"/>
<circle cx="65.7" cy="97.2" r="7.3"/>
<circle cx="92.5" cy="97.2" r="7.3"/>
<circle cx="117.1" cy="96.2" r="7.2"/>
<circle cx="143.4" cy="96.4" r="7.1"/>
<circle cx="169" cy="97.1" r="6.6"/>
<circle cx="194.8" cy="96.7" r="6.9"/>
<circle cx="220.5" cy="97" r="6.9"/>
<circle cx="246.1" cy="97.1" r="6.9"/>
<circle cx="271.7" cy="96.7" r="7.2"/>
<circle cx="296.9" cy="97.5" r="6.9"/>
<circle cx="52.3" cy="107.6" r="6.9"/>
<circle cx="78.9" cy="109.1" r="6.7"/>
<circle cx="104.1" cy="107.8" r="7.1"/>
<circle cx="130.6" cy="108.2" r="7.1"/>
<circle cx="155.9" cy="107.6" r="7.2"/>
<circle cx="182.3" cy="108.1" r="7"/>
<circle cx="207.6" cy="108.4" r="7.1"/>
<circle cx="233.1" cy="107.7" r="6.9"/>
<circle cx="258.3" cy="108.6" r="6.9"/>
<circle cx="283.3" cy="107.7" r="7"/>
<circle cx="41.3" cy="119.4" r="7.1"/>
<circle cx="66" cy="119.4" r="6.8"/>
<circle cx="91.3" cy="120.7" r="7.1"/>
<circle cx="117.8" cy="119.9" r="6.8"/>
<circle cx="143" cy="119.5" r="7"/>
<circle cx="169.2" cy="120.4" r="7.2"/>
<circle cx="195.1" cy="119.6" r="6.9"/>
<circle cx="219.3" cy="119.7" r="6.8"/>
<circle cx="247.1" cy="119.8" r="6.8"/>
<circle cx="271.4" cy="119.3" r="6.9"/>
<circle cx="297.5" cy="120.4" r="7"/>
<circle cx="54.2" cy="131.4" r="7"/>
<circle cx="79.1" cy="130.2" r="6.9"/>
<circle cx="104.7" cy="131" r="7.1"/>
<circle cx="131.1" cy="131.9" r="6.9"/>
<circle cx="156" cy="131.9" r="6.8"/>
<circle cx="182.2" cy="131.4" r="7"/>
<circle cx="207.4" cy="131" r="6.9"/>
<circle cx="232.3" cy="130.7" r="7.1"/>
<circle cx="259.1" cy="131.3" r="7.1"/>
<circle cx="285.6" cy="132.7" r="7"/>
<circle cx="40.3" cy="141.9" r="7.3"/>
<circle cx="65.6" cy="142.6" r="6.9"/>
<circle cx="92.3" cy="143.2" r="6.9"/>
<circle cx="117.6" cy="142.6" r="7"/>
<circle cx="143" cy="142.5" r="6.9"/>
<circle cx="168.7" cy="142.1" r="7.3"/>
<circle cx="195.7" cy="143.3" r="7"/>
<circle cx="220.8" cy="141.5" r="6.9"/>
<circle cx="246.3" cy="143.4" r="6.9"/>
<circle cx="272.5" cy="142.6" r="6.9"/>
<circle cx="297.9" cy="142.9" r="7"/>
<circle cx="53.2" cy="153.8" r="7"/>
<circle cx="79.9" cy="152.7" r="7"/>
<circle cx="104.4" cy="153.7" r="6.9"/>
<circle cx="130.8" cy="153.8" r="7"/>
<circle cx="156.4" cy="154.4" r="7"/>
<circle cx="181.9" cy="153.6" r="6.9"/>
<circle cx="207.2" cy="153.8" r="6.9"/>
<circle cx="232.7" cy="154.1" r="6.9"/>
<circle cx="258.8" cy="154" r="7.2"/>
<circle cx="284.4" cy="154.5" r="7.3"/>
<circle cx="40.3" cy="165.1" r="7"/>
<circle cx="66.9" cy="165.6" r="6.7"/>
<circle cx="93.1" cy="165.3" r="7"/>
<circle cx="117.9" cy="164.7" r="6.9"/>
<circle cx="143.7" cy="165.7" r="7.1"/>
<circle cx="168.7" cy="165.8" r="6.8"/>
<circle cx="193.9" cy="164.6" r="7.1"/>
<circle cx="219.5" cy="165.1" r="6.8"/>
<circle cx="246.1" cy="165.4" r="6.9"/>
<circle cx="272.2" cy="165" r="7"/>
<circle cx="297.3" cy="165.5" r="7"/>
<circle cx="53.4" cy="176.8" r="6.8"/>
<circle cx="78.5" cy="177.4" r="7.4"/>
<circle cx="104.4" cy="176.2" r="7.1"/>
<circle cx="129.9" cy="176.6" r="7.2"/>
<circle cx="156" cy="176.7" r="7"/>
<circle cx="182.4" cy="176" r="6.9"/>
<circle cx="207.1" cy="176.8" r="6.9"/>
<circle cx="233.8" cy="177.1" r="6.7"/>
<circle cx="258.5" cy="176.7" r="7.1"/>
<circle cx="284.7" cy="178" r="6.8"/>
<circle cx="41.4" cy="188.2" r="7.1"/>
<circle cx="65.3" cy="188" r="6.9"/>
<circle cx="91.9" cy="188.2" r="6.7"/>
<circle cx="117" cy="187" r="7"/>
<circle cx="144.1" cy="188.3" r="7.2"/>
<circle cx="170.5" cy="188.2" r="6.8"/>
<circle cx="194.5" cy="187.6" r="7.2"/>
<circle cx="220.2" cy="188.4" r="6.9"/>
<circle cx="246.3" cy="187.6" r="7"/>
<circle cx="270.2" cy="187.8" r="6.9"/>
<circle cx="296.2" cy="188.3" r="7"/>
<circle cx="54" cy="198.6" r="7"/>
<circle cx="78.1" cy="199.9" r="6.9"/>
<circle cx="105.4" cy="199.5" r="7.2"/>
<circle cx="130.9" cy="198.9" r="6.8"/>
<circle cx="156.3" cy="199.9" r="7.1"/>
<circle cx="181.8" cy="199.6" r="6.9"/>
<circle cx="207.4" cy="198.9" r="7.1"/>
<circle cx="232.9" cy="199.5" r="7"/>
<circle cx="258.4" cy="200.2" r="6.7"/>
<circle cx="284.4" cy="200.1" r="7"/>
<circle cx="41.6" cy="210.5" r="6.9"/>
<circle cx="66.1" cy="210.5" r="6.8"/>
<circle cx="91.6" cy="211.2" r="7.1"/>
<circle cx="117.6" cy="210" r="6.7"/>
<circle cx="142.7" cy="211.7" r="7.2"/>
<circle cx="169.4" cy="210" r="7.1"/>
<circle cx="194.5" cy="211.2" r="7.1"/>
<circle cx="220.6" cy="210.8" r="7"/>
<circle cx="246" cy="210.3" r="6.8"/>
<circle cx="271.2" cy="210.1" r="6.9"/>
<circle cx="297.6" cy="210.9" r="7.1"/>
<circle cx="53.6" cy="222.6" r="7"/>
<circle cx="78.9" cy="221.9" r="7.1"/>
<circle cx="104.8" cy="222.3" r="6.9"/>
<circle cx="130.3" cy="222.8" r="7.1"/>
<circle cx="156" cy="221.5" r="7.1"/>
<circle cx="181.6" cy="221.5" r="6.9"/>
<circle cx="207.9" cy="223" r="6.9"/>
<circle cx="231.7" cy="221.8" r="7.1"/>
<circle cx="257.9" cy="222.2" r="7"/>
<circle cx="284.3" cy="222.7" r="7.1"/>
<circle cx="40.1" cy="232.8" r="7"/>
<circle cx="65.8" cy="233.4" r="7.1"/>
<circle cx="93" cy="234.3" r="6.9"/>
<circle cx="118" cy="233.3" r="6.9"/>
<circle cx="143.4" cy="233.8" r="7"/>
<circle cx="168.7" cy="233.5" r="7.1"/>
<circle cx="195.1" cy="233.1" r="7"/>
<circle cx="220" cy="233.2" r="6.7"/>
<circle cx="245.2" cy="233.3" r="6.9"/>
<circle cx="271.8" cy="233.6" r="6.7"/>
<circle cx="296.4" cy="234" r="6.9"/>
<circle cx="52.5" cy="245.6" r="6.8"/>
<circle cx="79.4" cy="245.2" r="7"/>
<circle cx="105.5" cy="245.6" r="7"/>
<circle cx="130.5" cy="245" r="7.2"/>
<circle cx="156" cy="245.7" r="6.8"/>
<circle cx="182.3" cy="244.9" r="7.1"/>
<circle cx="206.5" cy="244.6" r="7"/>
<circle cx="233.5" cy="244.3" r="6.8"/>
<circle cx="258.9" cy="245" r="7"/>
<circle cx="285.7" cy="244.3" r="6.9"/>
<circle cx="40.5" cy="256.9" r="6.6"/>
<circle cx="66.9" cy="256.6" r="7.1"/>
<circle cx="91.8" cy="255.7" r="6.9"/>
<circle cx="118" cy="256" r="7.2"/>
<circle cx="143.9" cy="256.9" r="7.1"/>
<circle cx="168.5" cy="255.5" r="6.9"/>
<circle cx="195.1" cy="256.7" r="7.1"/>
<circle cx="220.3" cy="255.7" r="7.1"/>
<circle cx="246.2" cy="256.4" r="6.9"/>
<circle cx="271.2" cy="256" r="6.7"/>
<circle cx="297.4" cy="256" r="7.3"/>
</g>
<rect x="40.5" y="28.5" width="257" height="228" fill="none" stroke="#fff" stroke-width="1" shape-rendering="crispEdges"/>
<g fill="url(#sg)">
<circle cx="52" cy="29.5" r="7.7"/>
<circle cx="233.8" cy="28.4" r="7.7"/>
<circle cx="284.8" cy="28.3" r="7.4"/>
<circle cx="39.8" cy="84.8" r="7.2"/>
<circle cx="297.6" cy="86.2" r="7.5"/>
<circle cx="42" cy="108.1" r="7.4"/>
<circle cx="297.8" cy="153.5" r="7.7"/>
<circle cx="297" cy="199.9" r="7.6"/>
<circle cx="40.1" cy="223" r="7.3"/>
<circle cx="297.2" cy="222.4" r="7.4"/>
<circle cx="104.3" cy="256.1" r="7.7"/>
<circle cx="129.5" cy="256.1" r="7.5"/>
<circle cx="207.1" cy="257.1" r="7.3"/>
<circle cx="40.6" cy="28.2" r="7.4"/>
<circle cx="142.7" cy="28.9" r="7.8"/>
<circle cx="41.3" cy="119.4" r="7.6"/>
<circle cx="246.2" cy="256.4" r="7.4"/>
<circle cx="271.2" cy="256" r="7.2"/>
</g>
<g fill="none" stroke-width="1"><path d="M40.5 244.5V214.5M36.5 219.5L40.5 214.5L44.5 219.5" stroke="#6e8cd6"/><path d="M40.5 244.5H68.5M63.5 240.5L68.5 244.5L63.5 248.5" stroke="#ff4545"/></g><text x="37.5" y="214.5" fill="#6e8cd6" font-family="Liberation Mono" font-size="10">z</text><text x="70.5" y="247.5" fill="#ff4545" font-family="Liberation Mono" font-size="10">x</text><text x="37.5" y="247.5" fill="#0a7a0a" font-family="Liberation Mono" font-size="10">y</text>
</svg>
<div class="vl mono">Front</div></div>
<div class="vp" style="left:1px;top:378px;width:338px;height:285px">
<svg width="338" height="285" viewBox="0 0 338 285" style="position:absolute;left:0;top:0"><g fill="url(#sg)">
<rect x="54.5" y="28.5" width="229" height="228" fill="#742f2f"/>
<circle cx="65.6" cy="28.3" r="7"/>
<circle cx="90.7" cy="28.6" r="6.9"/>
<circle cx="111.5" cy="28.8" r="7"/>
<circle cx="135.5" cy="28.8" r="6.9"/>
<circle cx="157.4" cy="28.4" r="7.2"/>
<circle cx="180.8" cy="28.6" r="7.1"/>
<circle cx="202.4" cy="28.7" r="7.1"/>
<circle cx="226.2" cy="29.3" r="7.1"/>
<circle cx="248.6" cy="28.8" r="7.1"/>
<circle cx="270.7" cy="28.9" r="7.1"/>
<circle cx="54.9" cy="38.8" r="6.9"/>
<circle cx="77.1" cy="40.1" r="6.9"/>
<circle cx="99.7" cy="40.7" r="7"/>
<circle cx="123.6" cy="40.3" r="7.2"/>
<circle cx="145.7" cy="40.7" r="6.8"/>
<circle cx="169.3" cy="39.2" r="6.7"/>
<circle cx="192" cy="39.7" r="7"/>
<circle cx="214.9" cy="39.8" r="7.1"/>
<circle cx="238.5" cy="38.8" r="6.9"/>
<circle cx="261.2" cy="40.5" r="6.8"/>
<circle cx="283.9" cy="41" r="7"/>
<circle cx="66.4" cy="52.1" r="6.8"/>
<circle cx="89.2" cy="51.1" r="6.9"/>
<circle cx="112" cy="52.7" r="7"/>
<circle cx="134.9" cy="51.8" r="7"/>
<circle cx="156.7" cy="51" r="7"/>
<circle cx="180.3" cy="51.8" r="6.9"/>
<circle cx="204.3" cy="50.2" r="7.1"/>
<circle cx="226.8" cy="51.9" r="7"/>
<circle cx="249.6" cy="51" r="7.3"/>
<circle cx="271.8" cy="51.4" r="7.1"/>
<circle cx="55.4" cy="62.3" r="7.2"/>
<circle cx="76.7" cy="62.8" r="7.2"/>
<circle cx="100.4" cy="62.8" r="7"/>
<circle cx="123.6" cy="62.7" r="7.2"/>
<circle cx="145.8" cy="62.6" r="7"/>
<circle cx="168.9" cy="61.5" r="7"/>
<circle cx="190.8" cy="62.8" r="7"/>
<circle cx="213.8" cy="62.6" r="7"/>
<circle cx="238.1" cy="62.1" r="6.9"/>
<circle cx="260.7" cy="62.1" r="6.9"/>
<circle cx="283.6" cy="63" r="7"/>
<circle cx="66" cy="74.4" r="6.8"/>
<circle cx="88.3" cy="73.7" r="7.1"/>
<circle cx="112.1" cy="74.1" r="7.1"/>
<circle cx="135.4" cy="74.2" r="6.9"/>
<circle cx="157.5" cy="74" r="7.2"/>
<circle cx="180" cy="74.9" r="7.1"/>
<circle cx="203" cy="75.1" r="6.9"/>
<circle cx="226.3" cy="72.9" r="6.9"/>
<circle cx="249.4" cy="73.7" r="6.7"/>
<circle cx="272.6" cy="74.9" r="7"/>
<circle cx="55" cy="85.6" r="7.1"/>
<circle cx="77.2" cy="84.8" r="6.8"/>
<circle cx="100.7" cy="85.4" r="7.4"/>
<circle cx="123.4" cy="85.1" r="7.2"/>
<circle cx="145.8" cy="86.3" r="6.9"/>
<circle cx="169.1" cy="86.3" r="7"/>
<circle cx="191.5" cy="85.8" r="7.1"/>
<circle cx="215.2" cy="85.3" r="7"/>
<circle cx="237.6" cy="84.1" r="6.9"/>
<circle cx="259.9" cy="85.8" r="7"/>
<circle cx="283.9" cy="85.1" r="7.3"/>
<circle cx="65.8" cy="97.4" r="7"/>
<circle cx="89.3" cy="96.9" r="6.7"/>
<circle cx="112.1" cy="96.6" r="6.9"/>
<circle cx="134.4" cy="96.2" r="7"/>
<circle cx="158.3" cy="97.7" r="7.1"/>
<circle cx="180.9" cy="96.5" r="7.2"/>
<circle cx="203.7" cy="97.4" r="6.9"/>
<circle cx="226" cy="96.8" r="7.2"/>
<circle cx="249.3" cy="97.5" r="6.8"/>
<circle cx="271.7" cy="96.9" r="7.1"/>
<circle cx="54.8" cy="107.4" r="6.8"/>
<circle cx="77.2" cy="108.6" r="7"/>
<circle cx="100" cy="108" r="7.2"/>
<circle cx="123.1" cy="108.8" r="6.9"/>
<circle cx="146.1" cy="108.2" r="7.3"/>
<circle cx="167.7" cy="108.4" r="7"/>
<circle cx="191.8" cy="108.4" r="6.8"/>
<circle cx="214" cy="108.6" r="7"/>
<circle cx="237.6" cy="108.8" r="7.1"/>
<circle cx="261.2" cy="109" r="7.1"/>
<circle cx="284.4" cy="108.4" r="7.1"/>
<circle cx="65.8" cy="119.9" r="6.9"/>
<circle cx="89.9" cy="119.5" r="7"/>
<circle cx="111.4" cy="119.7" r="7.1"/>
<circle cx="134.9" cy="120.5" r="7"/>
<circle cx="157.4" cy="119.6" r="7"/>
<circle cx="181.4" cy="119.6" r="7.1"/>
<circle cx="204.2" cy="119.4" r="7.2"/>
<circle cx="226.7" cy="119.2" r="6.9"/>
<circle cx="249.5" cy="119.7" r="7.2"/>
<circle cx="272.6" cy="118.5" r="6.5"/>
<circle cx="54.4" cy="131.4" r="6.9"/>
<circle cx="77.6" cy="130.8" r="7.1"/>
<circle cx="99.9" cy="129.9" r="6.9"/>
<circle cx="122.8" cy="130.7" r="7.2"/>
<circle cx="146.5" cy="131.5" r="7.1"/>
<circle cx="169" cy="131.3" r="7.2"/>
<circle cx="191.7" cy="131.5" r="6.9"/>
<circle cx="214.1" cy="131.2" r="7.1"/>
<circle cx="237.9" cy="131.4" r="7.4"/>
<circle cx="260.5" cy="131" r="6.6"/>
<circle cx="283.4" cy="131.6" r="7"/>
<circle cx="65.8" cy="143.3" r="7"/>
<circle cx="89.4" cy="142.2" r="7.1"/>
<circle cx="111.9" cy="142.5" r="6.9"/>
<circle cx="134.6" cy="142" r="6.9"/>
<circle cx="158.5" cy="143.1" r="7.2"/>
<circle cx="180.3" cy="141.4" r="6.9"/>
<circle cx="202.9" cy="142.8" r="6.9"/>
<circle cx="227.7" cy="143" r="7.3"/>
<circle cx="250.1" cy="142.2" r="7"/>
<circle cx="272" cy="142.2" r="6.8"/>
<circle cx="54.6" cy="153.2" r="7.3"/>
<circle cx="76.2" cy="153.9" r="7"/>
<circle cx="99.3" cy="153.7" r="7"/>
<circle cx="123.5" cy="154.1" r="7"/>
<circle cx="145.9" cy="155.1" r="7"/>
<circle cx="168.3" cy="154" r="7"/>
<circle cx="191.5" cy="153.9" r="6.9"/>
<circle cx="214.5" cy="153.6" r="6.9"/>
<circle cx="237.6" cy="153.4" r="7.1"/>
<circle cx="260" cy="153.9" r="6.8"/>
<circle cx="283.2" cy="154" r="7.2"/>
<circle cx="65.8" cy="164.8" r="6.7"/>
<circle cx="88.6" cy="166.2" r="6.9"/>
<circle cx="111.6" cy="166.4" r="7"/>
<circle cx="133.7" cy="165.4" r="7.1"/>
<circle cx="156.6" cy="166" r="7.2"/>
<circle cx="180.7" cy="165.4" r="6.9"/>
<circle cx="202.3" cy="163.7" r="6.9"/>
<circle cx="226.4" cy="165.1" r="7"/>
<circle cx="249.5" cy="165.4" r="7.2"/>
<circle cx="271.6" cy="164.7" r="7.1"/>
<circle cx="55.1" cy="177.7" r="7"/>
<circle cx="77.5" cy="175.8" r="7.2"/>
<circle cx="99.4" cy="176.6" r="6.8"/>
<circle cx="122.4" cy="176.4" r="6.7"/>
<circle cx="145.8" cy="177" r="7.2"/>
<circle cx="168.6" cy="176.9" r="6.9"/>
<circle cx="191.9" cy="177" r="6.8"/>
<circle cx="214.3" cy="176.8" r="7"/>
<circle cx="236.5" cy="176.8" r="7.2"/>
<circle cx="259.8" cy="177.1" r="7"/>
<circle cx="283.2" cy="177.1" r="6.9"/>
<circle cx="66" cy="187.7" r="6.8"/>
<circle cx="88.4" cy="188.5" r="7.2"/>
<circle cx="112.3" cy="188.1" r="7.2"/>
<circle cx="135.2" cy="187.4" r="6.8"/>
<circle cx="157" cy="189" r="7"/>
<circle cx="180.1" cy="188.4" r="7.3"/>
<circle cx="203.7" cy="187.3" r="6.6"/>
<circle cx="226.4" cy="187.6" r="6.8"/>
<circle cx="249.1" cy="188.2" r="7"/>
<circle cx="271.2" cy="189.6" r="7"/>
<circle cx="54.7" cy="199.6" r="7.1"/>
<circle cx="77.8" cy="199.9" r="7"/>
<circle cx="99.6" cy="200.4" r="7"/>
<circle cx="124.2" cy="199.4" r="7.1"/>
<circle cx="145.7" cy="200.2" r="7.1"/>
<circle cx="168.7" cy="199.9" r="7"/>
<circle cx="191.6" cy="199.2" r="7.1"/>
<circle cx="214" cy="199.3" r="6.9"/>
<circle cx="239.5" cy="199.1" r="7.1"/>
<circle cx="259" cy="198.9" r="7.1"/>
<circle cx="284.2" cy="199.8" r="6.9"/>
<circle cx="65.8" cy="211.1" r="7.1"/>
<circle cx="89.1" cy="210.6" r="6.8"/>
<circle cx="112.1" cy="210.3" r="7.1"/>
<circle cx="134.2" cy="209.7" r="7"/>
<circle cx="157.3" cy="210.9" r="7.2"/>
<circle cx="180.3" cy="210.8" r="7.1"/>
<circle cx="202.4" cy="210" r="6.9"/>
<circle cx="225.4" cy="211.3" r="7.1"/>
<circle cx="249.9" cy="211.1" r="7.1"/>
<circle cx="271.7" cy="211.4" r="6.9"/>
<circle cx="55.3" cy="222.9" r="6.8"/>
<circle cx="76.2" cy="222.3" r="7"/>
<circle cx="100.3" cy="222.9" r="7.2"/>
<circle cx="123.9" cy="222" r="6.9"/>
<circle cx="146.7" cy="222.4" r="7"/>
<circle cx="168.3" cy="223" r="7.1"/>
<circle cx="191.4" cy="222.6" r="7"/>
<circle cx="215.9" cy="221.9" r="7.2"/>
<circle cx="237.1" cy="221.8" r="7.1"/>
<circle cx="261.1" cy="222.1" r="6.8"/>
<circle cx="282.7" cy="222" r="6.8"/>
<circle cx="66.1" cy="233.8" r="7.2"/>
<circle cx="89.6" cy="234.5" r="7"/>
<circle cx="111.5" cy="234" r="6.9"/>
<circle cx="135.3" cy="233.4" r="6.8"/>
<circle cx="157.8" cy="234" r="6.9"/>
<circle cx="180.2" cy="233.8" r="7.2"/>
<circle cx="202.9" cy="233" r="7.2"/>
<circle cx="226.1" cy="234" r="7"/>
<circle cx="249.2" cy="233.5" r="7.1"/>
<circle cx="271.8" cy="232.9" r="6.8"/>
<circle cx="55" cy="245.4" r="7.3"/>
<circle cx="78.1" cy="244.9" r="7.1"/>
<circle cx="100.5" cy="245.5" r="7"/>
<circle cx="122.3" cy="245.3" r="7.2"/>
<circle cx="145.7" cy="244.7" r="7"/>
<circle cx="169.6" cy="244.3" r="6.9"/>
<circle cx="190.7" cy="245.4" r="7"/>
<circle cx="214.9" cy="245.5" r="6.8"/>
<circle cx="238.1" cy="245.2" r="7.4"/>
<circle cx="260.4" cy="244.9" r="7.1"/>
<circle cx="283.4" cy="245.6" r="6.7"/>
<circle cx="66" cy="256.7" r="6.9"/>
<circle cx="89.6" cy="256" r="6.9"/>
<circle cx="111.5" cy="256.5" r="6.9"/>
<circle cx="135.1" cy="256.9" r="7.3"/>
<circle cx="157" cy="255.7" r="7.1"/>
<circle cx="180.1" cy="256" r="7.1"/>
<circle cx="203" cy="256.4" r="7.3"/>
<circle cx="226.1" cy="256.8" r="7.1"/>
<circle cx="248.6" cy="257" r="7.1"/>
<circle cx="272.9" cy="257" r="6.9"/>
<circle cx="55.6" cy="27.1" r="7.1"/>
<circle cx="76.3" cy="28.4" r="6.9"/>
<circle cx="100.1" cy="28.1" r="6.8"/>
<circle cx="123.7" cy="28.4" r="7"/>
<circle cx="146" cy="28.8" r="7.3"/>
<circle cx="168.5" cy="28.3" r="7.1"/>
<circle cx="190.3" cy="29.1" r="6.9"/>
<circle cx="214.6" cy="27.9" r="7"/>
<circle cx="237.8" cy="29.1" r="7"/>
<circle cx="260.5" cy="28.1" r="7"/>
<circle cx="282.6" cy="28.5" r="6.9"/>
<circle cx="66.3" cy="40.5" r="6.7"/>
<circle cx="89.7" cy="39.2" r="7.1"/>
<circle cx="111.5" cy="39" r="7.3"/>
<circle cx="134.8" cy="39.5" r="6.9"/>
<circle cx="157.2" cy="39.7" r="7"/>
<circle cx="180.4" cy="40.6" r="7.1"/>
<circle cx="203.2" cy="40.3" r="6.9"/>
<circle cx="226.4" cy="41.3" r="7.2"/>
<circle cx="248.8" cy="40.2" r="6.7"/>
<circle cx="271.5" cy="39.5" r="7"/>
<circle cx="54.9" cy="51.4" r="7.3"/>
<circle cx="77.3" cy="50.9" r="7.2"/>
<circle cx="100.6" cy="50.9" r="6.9"/>
<circle cx="122.9" cy="50.7" r="6.8"/>
<circle cx="146.3" cy="51.4" r="7"/>
<circle cx="168.6" cy="51" r="6.9"/>
<circle cx="191.8" cy="51.7" r="7.1"/>
<circle cx="214.5" cy="51.4" r="7.1"/>
<circle cx="238.6" cy="51.1" r="7"/>
<circle cx="261.2" cy="52.5" r="7"/>
<circle cx="283.2" cy="51.5" r="7"/>
<circle cx="65.6" cy="62.2" r="6.9"/>
<circle cx="88.9" cy="63" r="7.2"/>
<circle cx="110.9" cy="63.1" r="6.7"/>
<circle cx="134.6" cy="62.2" r="7.1"/>
<circle cx="157.5" cy="62.6" r="6.9"/>
<circle cx="179.8" cy="63.3" r="7.2"/>
<circle cx="202.8" cy="63" r="6.9"/>
<circle cx="226.3" cy="62" r="7.1"/>
<circle cx="249.1" cy="62.4" r="7.3"/>
<circle cx="272" cy="64" r="7"/>
<circle cx="55.8" cy="73.8" r="7.1"/>
<circle cx="78.4" cy="74" r="7"/>
<circle cx="100.8" cy="74.5" r="7.2"/>
<circle cx="123.5" cy="74" r="7.1"/>
<circle cx="146.5" cy="75.1" r="7"/>
<circle cx="168" cy="74.3" r="7.2"/>
<circle cx="191.6" cy="74.2" r="6.8"/>
<circle cx="215.8" cy="74.1" r="7.1"/>
<circle cx="237.8" cy="73.5" r="6.8"/>
<circle cx="260.2" cy="74.6" r="6.9"/>
<circle cx="282.9" cy="73.4" r="7"/>
<circle cx="65.7" cy="85.7" r="6.9"/>
<circle cx="88.6" cy="84.9" r="6.9"/>
<circle cx="112.3" cy="85.2" r="7.1"/>
<circle cx="134.2" cy="83.8" r="7.1"/>
<circle cx="156.9" cy="86.4" r="6.8"/>
<circle cx="180.4" cy="85.6" r="7.1"/>
<circle cx="204.6" cy="85.3" r="6.9"/>
<circle cx="226.3" cy="86.1" r="6.9"/>
<circle cx="250" cy="85.1" r="6.9"/>
<circle cx="271.4" cy="85.9" r="7"/>
<circle cx="54.7" cy="96.8" r="6.9"/>
<circle cx="78" cy="97.2" r="7.2"/>
<circle cx="100.5" cy="97.3" r="7"/>
<circle cx="122.7" cy="97.6" r="7"/>
<circle cx="146.9" cy="97.2" r="6.9"/>
<circle cx="169.4" cy="97.5" r="7.1"/>
<circle cx="192" cy="98" r="6.7"/>
<circle cx="215" cy="97.3" r="7.1"/>
<circle cx="238.4" cy="97" r="7"/>
<circle cx="259.9" cy="97" r="6.8"/>
<circle cx="282.9" cy="97.3" r="6.7"/>
<circle cx="66.3" cy="108.1" r="6.9"/>
<circle cx="88.8" cy="108.9" r="6.9"/>
<circle cx="112.3" cy="109" r="7"/>
<circle cx="135.1" cy="108.7" r="6.9"/>
<circle cx="159" cy="108.2" r="7"/>
<circle cx="179.9" cy="108.7" r="6.8"/>
<circle cx="203.8" cy="108.9" r="6.8"/>
<circle cx="225.6" cy="108.1" r="7"/>
<circle cx="250.1" cy="109.1" r="7.1"/>
<circle cx="271.4" cy="108.8" r="7"/>
<circle cx="54.7" cy="120.6" r="7"/>
<circle cx="77.5" cy="119.7" r="7"/>
<circle cx="100.2" cy="120.1" r="6.8"/>
<circle cx="123.2" cy="119.4" r="6.9"/>
<circle cx="146.2" cy="119.9" r="6.9"/>
<circle cx="169" cy="119" r="7.2"/>
<circle cx="192" cy="120.1" r="6.8"/>
<circle cx="214.8" cy="119.5" r="7"/>
<circle cx="237.4" cy="118.8" r="7.2"/>
<circle cx="260.1" cy="119.7" r="7.3"/>
<circle cx="282.9" cy="120.3" r="6.9"/>
<circle cx="66.1" cy="131.5" r="7.1"/>
<circle cx="88.6" cy="131.8" r="7.4"/>
<circle cx="112" cy="131.7" r="7.2"/>
<circle cx="134" cy="131.7" r="7"/>
<circle cx="158" cy="130.6" r="7"/>
<circle cx="180.3" cy="130.7" r="6.9"/>
<circle cx="204" cy="131.3" r="7"/>
<circle cx="225.3" cy="131.8" r="7.2"/>
<circle cx="249.8" cy="130.6" r="7"/>
<circle cx="272.5" cy="130.7" r="7"/>
<circle cx="54.1" cy="142.8" r="7.2"/>
<circle cx="77.1" cy="143.3" r="6.9"/>
<circle cx="99.6" cy="142" r="7.2"/>
<circle cx="123.4" cy="141.7" r="6.8"/>
<circle cx="146.1" cy="142.4" r="7"/>
<circle cx="169" cy="142.2" r="6.8"/>
<circle cx="192.3" cy="143.4" r="7.1"/>
<circle cx="215.3" cy="142.4" r="7.1"/>
<circle cx="237.8" cy="142.3" r="7.2"/>
<circle cx="259.8" cy="142.4" r="7.1"/>
<circle cx="283.7" cy="142.9" r="7.1"/>
<circle cx="65.9" cy="153.8" r="7.1"/>
<circle cx="89.1" cy="154.6" r="7.1"/>
<circle cx="111.8" cy="153.2" r="6.8"/>
<circle cx="133.7" cy="154.9" r="6.6"/>
<circle cx="157.7" cy="153.3" r="7.2"/>
<circle cx="179.9" cy="154.4" r="6.8"/>
<circle cx="203.6" cy="154.4" r="7"/>
<circle cx="226.7" cy="153.8" r="7.1"/>
<circle cx="248.6" cy="153.9" r="7.2"/>
<circle cx="271.8" cy="153.1" r="6.9"/>
<circle cx="54.7" cy="165.7" r="7"/>
<circle cx="77.4" cy="166.2" r="7.1"/>
<circle cx="100" cy="164.6" r="6.9"/>
<circle cx="122.6" cy="165" r="7"/>
<circle cx="146.3" cy="165.6" r="6.8"/>
<circle cx="168.2" cy="165.4" r="7"/>
<circle cx="192" cy="165.4" r="7"/>
<circle cx="213.9" cy="165.4" r="7.1"/>
<circle cx="238.3" cy="164.9" r="7.1"/>
<circle cx="260.2" cy="165.8" r="6.9"/>
<circle cx="283" cy="165.3" r="6.8"/>
<circle cx="66.9" cy="177" r="7.3"/>
<circle cx="88.8" cy="176.1" r="6.9"/>
<circle cx="112.6" cy="177.1" r="6.8"/>
<circle cx="134.6" cy="176.7" r="6.9"/>
<circle cx="158.4" cy="176.7" r="7.1"/>
<circle cx="180.9" cy="176" r="6.9"/>
<circle cx="203.1" cy="176.8" r="7"/>
<circle cx="227" cy="177" r="6.8"/>
<circle cx="249.2" cy="177.2" r="6.9"/>
<circle cx="272.4" cy="175.9" r="7"/>
<circle cx="54.2" cy="187.8" r="7.2"/>
<circle cx="76.8" cy="188.9" r="6.7"/>
<circle cx="100.2" cy="188.5" r="7.1"/>
<circle cx="123.3" cy="189" r="6.8"/>
<circle cx="146.4" cy="187.7" r="7.1"/>
<circle cx="168.4" cy="188.2" r="7.1"/>
<circle cx="192.4" cy="188.1" r="6.9"/>
<circle cx="214.5" cy="187.5" r="7.3"/>
<circle cx="238" cy="187.7" r="6.9"/>
<circle cx="260.7" cy="188.9" r="7.3"/>
<circle cx="284.2" cy="187.7" r="7.1"/>
<circle cx="66.3" cy="199" r="7"/>
<circle cx="88.7" cy="199.5" r="6.8"/>
<circle cx="111.8" cy="199.1" r="7.2"/>
<circle cx="134.3" cy="200.5" r="7.2"/>
<circle cx="157.8" cy="199.7" r="6.9"/>
<circle cx="180" cy="200.7" r="7"/>
<circle cx="203.9" cy="199.7" r="7.1"/>
<circle cx="226.3" cy="199.8" r="6.7"/>
<circle cx="249.6" cy="200" r="7"/>
<circle cx="271.6" cy="198.9" r="6.7"/>
<circle cx="54.4" cy="210.9" r="6.8"/>
<circle cx="78.1" cy="210.9" r="6.9"/>
<circle cx="100.9" cy="210.7" r="7"/>
<circle cx="123.5" cy="210.9" r="7.1"/>
<circle cx="145.6" cy="211.4" r="7"/>
<circle cx="169.6" cy="211.1" r="7.1"/>
<circle cx="191.8" cy="211.1" r="6.8"/>
<circle cx="215.5" cy="211.6" r="6.9"/>
<circle cx="237" cy="211.5" r="7"/>
<circle cx="260.8" cy="210.4" r="7"/>
<circle cx="282.7" cy="211.3" r="7.2"/>
<circle cx="65.6" cy="222" r="7"/>
<circle cx="88.3" cy="222.4" r="7.2"/>
<circle cx="112" cy="222.5" r="6.9"/>
<circle cx="135" cy="221.9" r="7.1"/>
<circle cx="158.1" cy="222.7" r="6.8"/>
<circle cx="179.3" cy="221.6" r="7"/>
<circle cx="203.6" cy="221.7" r="7.1"/>
<circle cx="226.8" cy="222.7" r="7"/>
<circle cx="249.7" cy="223" r="7.1"/>
<circle cx="272.2" cy="222.6" r="7"/>
<circle cx="54.6" cy="233.1" r="7"/>
<circle cx="76.8" cy="232.5" r="7.1"/>
<circle cx="100.6" cy="233.8" r="6.8"/>
<circle cx="124.3" cy="232.9" r="6.9"/>
<circle cx="145.4" cy="233.3" r="7.2"/>
<circle cx="169.5" cy="233.8" r="6.9"/>
<circle cx="191.9" cy="234" r="7.3"/>
<circle cx="215.1" cy="233.7" r="7"/>
<circle cx="238.2" cy="233.1" r="6.9"/>
<circle cx="260.6" cy="233.4" r="7"/>
<circle cx="283.1" cy="233.5" r="7"/>
<circle cx="66.7" cy="245" r="7.3"/>
<circle cx="89.5" cy="245.3" r="7.2"/>
<circle cx="112" cy="244.9" r="7.1"/>
<circle cx="135" cy="245.1" r="7.1"/>
<circle cx="157.5" cy="245.7" r="6.9"/>
<circle cx="180.5" cy="245.8" r="6.9"/>
<circle cx="202.8" cy="244.6" r="6.9"/>
<circle cx="227.5" cy="245.1" r="7"/>
<circle cx="249.8" cy="244.9" r="6.9"/>
<circle cx="271.7" cy="246" r="7"/>
<circle cx="54" cy="256.9" r="7"/>
<circle cx="77.3" cy="255.8" r="6.7"/>
<circle cx="101.1" cy="257.1" r="6.9"/>
<circle cx="123.5" cy="256.6" r="7"/>
<circle cx="147" cy="255.6" r="7.1"/>
<circle cx="168.6" cy="256.3" r="7.2"/>
<circle cx="192.6" cy="256.8" r="6.8"/>
<circle cx="215.3" cy="257" r="7.2"/>
<circle cx="237.2" cy="256.5" r="7.1"/>
<circle cx="261.2" cy="256.1" r="7"/>
<circle cx="283.6" cy="257.3" r="7"/>
</g>
<rect x="54.5" y="28.5" width="229" height="228" fill="none" stroke="#fff" stroke-width="1" shape-rendering="crispEdges"/>
<g fill="url(#sg)">
<circle cx="90.7" cy="28.6" r="7.4"/>
<circle cx="111.5" cy="28.8" r="7.5"/>
<circle cx="226.2" cy="29.3" r="7.6"/>
<circle cx="270.7" cy="28.9" r="7.6"/>
<circle cx="54.9" cy="38.8" r="7.4"/>
<circle cx="283.9" cy="41" r="7.5"/>
<circle cx="54.8" cy="107.4" r="7.3"/>
<circle cx="54.4" cy="131.4" r="7.4"/>
<circle cx="283.2" cy="154" r="7.7"/>
<circle cx="54.7" cy="199.6" r="7.6"/>
<circle cx="282.7" cy="222" r="7.3"/>
<circle cx="111.5" cy="256.5" r="7.4"/>
<circle cx="135.1" cy="256.9" r="7.8"/>
<circle cx="54.7" cy="96.8" r="7.4"/>
<circle cx="282.9" cy="97.3" r="7.2"/>
<circle cx="282.9" cy="120.3" r="7.4"/>
<circle cx="283.7" cy="142.9" r="7.6"/>
<circle cx="283.1" cy="233.5" r="7.5"/>
<circle cx="77.3" cy="255.8" r="7.2"/>
<circle cx="101.1" cy="257.1" r="7.4"/>
<circle cx="283.6" cy="257.3" r="7.5"/>
</g>
<g fill="none" stroke-width="1"><path d="M39.5 245.5V216.5M35.5 221.5L39.5 216.5L43.5 221.5" stroke="#6e8cd6"/><path d="M39.5 245.5H11.5M16.5 241.5L11.5 245.5L16.5 249.5" stroke="#0a7a0a"/></g><text x="36.5" y="214.5" fill="#6e8cd6" font-family="Liberation Mono" font-size="10">z</text><text x="2.5" y="248.5" fill="#0a7a0a" font-family="Liberation Mono" font-size="10">y</text><text x="36.5" y="248.5" fill="#ff4545" font-family="Liberation Mono" font-size="10">x</text>
</svg>
<div class="vl mono">Left</div></div>
<div class="a" style="left:341px;top:376px;width:342px;height:289px;background:#ffff00"></div>
<div class="vp" style="left:343px;top:378px;width:338px;height:285px">
<svg width="338" height="285" viewBox="343 378 338 285" style="position:absolute;left:0;top:0">
<path d="M409.9 582.1L494 522.2M494 522.2L609.7 570.8M494 522.2L491.3 413.2" stroke="#fff" stroke-width="1" fill="none"/>
<g fill="url(#sg)">
<circle cx="492.9" cy="429.2" r="4.2"/>
<circle cx="603.5" cy="562.8" r="4.2"/>
<circle cx="599.6" cy="571.3" r="4.2"/>
<circle cx="593.9" cy="563" r="4.2"/>
<circle cx="509" cy="424.6" r="4.3"/>
<circle cx="488.6" cy="425.2" r="4.3"/>
<circle cx="495.4" cy="433.1" r="4.3"/>
<circle cx="607.5" cy="568.3" r="4.3"/>
<circle cx="498.2" cy="424.6" r="4.3"/>
<circle cx="484.7" cy="433.6" r="4.3"/>
<circle cx="482.5" cy="416.7" r="4.3"/>
<circle cx="611.3" cy="560.4" r="4.3"/>
<circle cx="602.1" cy="560.7" r="4.3"/>
<circle cx="479.6" cy="424.9" r="4.3"/>
<circle cx="597.9" cy="569.8" r="4.3"/>
<circle cx="583.4" cy="578.4" r="4.3"/>
<circle cx="430.1" cy="581.4" r="4.3"/>
<circle cx="520.9" cy="427.8" r="4.3"/>
<circle cx="484.6" cy="420.8" r="4.3"/>
<circle cx="501.3" cy="428.5" r="4.3"/>
<circle cx="603.8" cy="549.5" r="4.4"/>
<circle cx="490.8" cy="428.5" r="4.4"/>
<circle cx="599.8" cy="559.5" r="4.4"/>
<circle cx="486.1" cy="437.8" r="4.4"/>
<circle cx="496.6" cy="435.5" r="4.4"/>
<circle cx="480.6" cy="429" r="4.4"/>
<circle cx="595.6" cy="568" r="4.4"/>
<circle cx="469" cy="429.2" r="4.4"/>
<circle cx="591" cy="577.1" r="4.4"/>
<circle cx="580.4" cy="576.8" r="4.4"/>
<circle cx="442" cy="587.4" r="4.4"/>
<circle cx="429.6" cy="570.5" r="4.4"/>
<circle cx="418.6" cy="570.6" r="4.4"/>
<circle cx="424" cy="562.7" r="4.4"/>
<circle cx="533.2" cy="430.6" r="4.4"/>
<circle cx="527.5" cy="422.2" r="4.4"/>
<circle cx="523.2" cy="432.3" r="4.4"/>
<circle cx="430.1" cy="588.5" r="4.4"/>
<circle cx="517.3" cy="423.3" r="4.4"/>
<circle cx="414.5" cy="579.5" r="4.4"/>
<circle cx="608.8" cy="530.1" r="4.4"/>
<circle cx="530" cy="438.9" r="4.4"/>
<circle cx="425.6" cy="579.7" r="4.4"/>
<circle cx="602.2" cy="522" r="4.4"/>
<circle cx="513" cy="432.2" r="4.4"/>
<circle cx="519.5" cy="440" r="4.4"/>
<circle cx="502.4" cy="431.9" r="4.4"/>
<circle cx="507.6" cy="423.1" r="4.4"/>
<circle cx="420.4" cy="587.8" r="4.4"/>
<circle cx="599.9" cy="547.2" r="4.4"/>
<circle cx="509.6" cy="440.6" r="4.4"/>
<circle cx="488.9" cy="441.1" r="4.4"/>
<circle cx="498.6" cy="440.2" r="4.4"/>
<circle cx="492" cy="432" r="4.4"/>
<circle cx="481.5" cy="433.7" r="4.4"/>
<circle cx="595.2" cy="557.5" r="4.4"/>
<circle cx="606.5" cy="556.7" r="4.4"/>
<circle cx="603.3" cy="566" r="4.4"/>
<circle cx="597.8" cy="574.3" r="4.4"/>
<circle cx="593.1" cy="565.9" r="4.4"/>
<circle cx="470.4" cy="433.8" r="4.5"/>
<circle cx="583.8" cy="584.1" r="4.5"/>
<circle cx="432.9" cy="567.1" r="4.5"/>
<circle cx="415.5" cy="542.9" r="4.5"/>
<circle cx="442.7" cy="594.4" r="4.5"/>
<circle cx="429.9" cy="577.3" r="4.5"/>
<circle cx="416.6" cy="560.3" r="4.5"/>
<circle cx="435.7" cy="585.4" r="4.5"/>
<circle cx="431.4" cy="594.4" r="4.5"/>
<circle cx="423.8" cy="568.7" r="4.5"/>
<circle cx="535.9" cy="434.8" r="4.5"/>
<circle cx="419.9" cy="577.2" r="4.5"/>
<circle cx="610.1" cy="518.4" r="4.5"/>
<circle cx="406.3" cy="560.7" r="4.5"/>
<circle cx="412.7" cy="569.2" r="4.5"/>
<circle cx="608" cy="545.7" r="4.5"/>
<circle cx="518.7" cy="427.7" r="4.5"/>
<circle cx="425.9" cy="586.6" r="4.5"/>
<circle cx="526.3" cy="435.9" r="4.5"/>
<circle cx="602.7" cy="536.8" r="4.5"/>
<circle cx="600.5" cy="519.6" r="4.5"/>
<circle cx="606.5" cy="527.1" r="4.5"/>
<circle cx="509.4" cy="428.1" r="4.5"/>
<circle cx="505.5" cy="435.6" r="4.5"/>
<circle cx="598" cy="546.5" r="4.5"/>
<circle cx="515.5" cy="435.5" r="4.5"/>
<circle cx="494.4" cy="436.4" r="4.5"/>
<circle cx="500.7" cy="446" r="4.5"/>
<circle cx="521.6" cy="444" r="4.5"/>
<circle cx="594.1" cy="554.7" r="4.5"/>
<circle cx="590.8" cy="563.3" r="4.5"/>
<circle cx="483.5" cy="437" r="4.5"/>
<circle cx="475.8" cy="429.1" r="4.5"/>
<circle cx="489.5" cy="445.1" r="4.5"/>
<circle cx="586.3" cy="573.5" r="4.5"/>
<circle cx="473.8" cy="436.4" r="4.5"/>
<circle cx="462.6" cy="437.5" r="4.5"/>
<circle cx="455.4" cy="429.5" r="4.5"/>
<circle cx="451.3" cy="437.7" r="4.6"/>
<circle cx="414.7" cy="548.9" r="4.6"/>
<circle cx="421.5" cy="557.4" r="4.6"/>
<circle cx="419.9" cy="540.5" r="4.6"/>
<circle cx="458.4" cy="590.9" r="4.6"/>
<circle cx="581.6" cy="582.3" r="4.6"/>
<circle cx="463.9" cy="599.9" r="4.6"/>
<circle cx="446.5" cy="447.1" r="4.6"/>
<circle cx="441" cy="582.8" r="4.6"/>
<circle cx="549.5" cy="439.8" r="4.6"/>
<circle cx="434.5" cy="575" r="4.6"/>
<circle cx="405" cy="549.8" r="4.6"/>
<circle cx="417.9" cy="566.7" r="4.6"/>
<circle cx="428.8" cy="565.7" r="4.6"/>
<circle cx="576.1" cy="473.3" r="4.6"/>
<circle cx="577.1" cy="591.8" r="4.6"/>
<circle cx="453" cy="601.5" r="4.6"/>
<circle cx="560.9" cy="437.9" r="4.6"/>
<circle cx="424.4" cy="576" r="4.6"/>
<circle cx="609.1" cy="534.2" r="4.6"/>
<circle cx="447.6" cy="592.5" r="4.6"/>
<circle cx="545.8" cy="448.5" r="4.6"/>
<circle cx="436.2" cy="592.8" r="4.6"/>
<circle cx="528" cy="440.6" r="4.6"/>
<circle cx="539.4" cy="438.7" r="4.6"/>
<circle cx="562.8" cy="455.3" r="4.6"/>
<circle cx="608.5" cy="516.1" r="4.6"/>
<circle cx="535" cy="447.9" r="4.6"/>
<circle cx="524.2" cy="449.3" r="4.6"/>
<circle cx="603.4" cy="525.1" r="4.6"/>
<circle cx="606.2" cy="542.7" r="4.6"/>
<circle cx="517.4" cy="440" r="4.6"/>
<circle cx="589.8" cy="552.3" r="4.6"/>
<circle cx="599.7" cy="534.1" r="4.6"/>
<circle cx="594.7" cy="543.8" r="4.6"/>
<circle cx="507" cy="440" r="4.6"/>
<circle cx="496.5" cy="441" r="4.6"/>
<circle cx="586.8" cy="562" r="4.6"/>
<circle cx="502.2" cy="449.7" r="4.6"/>
<circle cx="484.8" cy="440.4" r="4.6"/>
<circle cx="491.8" cy="450.2" r="4.6"/>
<circle cx="474.6" cy="441.3" r="4.6"/>
<circle cx="464" cy="442.6" r="4.6"/>
<circle cx="590.3" cy="579.9" r="4.6"/>
<circle cx="592.8" cy="571.2" r="4.6"/>
<circle cx="452.7" cy="442.9" r="4.6"/>
<circle cx="457.8" cy="432.7" r="4.6"/>
<circle cx="431.8" cy="544.9" r="4.6"/>
<circle cx="583.8" cy="571.6" r="4.6"/>
<circle cx="459.7" cy="598.6" r="4.6"/>
<circle cx="447.5" cy="434.4" r="4.6"/>
<circle cx="573.2" cy="442.7" r="4.6"/>
<circle cx="463.6" cy="589.3" r="4.6"/>
<circle cx="441" cy="571" r="4.6"/>
<circle cx="420.8" cy="546.8" r="4.6"/>
<circle cx="580" cy="598.1" r="4.6"/>
<circle cx="578.5" cy="579.6" r="4.6"/>
<circle cx="426.6" cy="554.9" r="4.6"/>
<circle cx="452.2" cy="589.1" r="4.6"/>
<circle cx="447.9" cy="581.3" r="4.6"/>
<circle cx="469.8" cy="597" r="4.6"/>
<circle cx="477.4" cy="606.2" r="4.6"/>
<circle cx="466.3" cy="607.1" r="4.6"/>
<circle cx="620.3" cy="503.4" r="4.6"/>
<circle cx="459.1" cy="450.3" r="4.6"/>
<circle cx="434.3" cy="563.5" r="4.6"/>
<circle cx="573.2" cy="590.1" r="4.6"/>
<circle cx="407.4" cy="528.9" r="4.6"/>
<circle cx="416.6" cy="554.5" r="4.6"/>
<circle cx="434.9" cy="580.9" r="4.6"/>
<circle cx="413.5" cy="537.1" r="4.6"/>
<circle cx="570.4" cy="599.7" r="4.6"/>
<circle cx="616.6" cy="513.3" r="4.6"/>
<circle cx="449" cy="599.5" r="4.6"/>
<circle cx="409.4" cy="545.6" r="4.6"/>
<circle cx="614.3" cy="494.2" r="4.7"/>
<circle cx="609.6" cy="503.4" r="4.7"/>
<circle cx="563" cy="442.8" r="4.7"/>
<circle cx="566.1" cy="609" r="4.7"/>
<circle cx="541.7" cy="443.2" r="4.7"/>
<circle cx="546" cy="435.2" r="4.7"/>
<circle cx="548.4" cy="452.4" r="4.7"/>
<circle cx="552.8" cy="442.6" r="4.7"/>
<circle cx="604.8" cy="513.5" r="4.7"/>
<circle cx="531.8" cy="443.8" r="4.7"/>
<circle cx="600.8" cy="522.7" r="4.7"/>
<circle cx="603.4" cy="540.8" r="4.7"/>
<circle cx="519.8" cy="444.6" r="4.7"/>
<circle cx="586.2" cy="533.6" r="4.7"/>
<circle cx="596.7" cy="531.3" r="4.7"/>
<circle cx="509.8" cy="445.3" r="4.7"/>
<circle cx="587.6" cy="550.3" r="4.7"/>
<circle cx="498.7" cy="445.9" r="4.7"/>
<circle cx="494.2" cy="453.5" r="4.7"/>
<circle cx="599.2" cy="549.8" r="4.7"/>
<circle cx="477.2" cy="447.1" r="4.7"/>
<circle cx="469.3" cy="437.2" r="4.7"/>
<circle cx="443.1" cy="552.5" r="4.7"/>
<circle cx="505.1" cy="454.3" r="4.7"/>
<circle cx="470.3" cy="586.2" r="4.7"/>
<circle cx="584.6" cy="559.6" r="4.7"/>
<circle cx="483.2" cy="604" r="4.7"/>
<circle cx="475.9" cy="595.8" r="4.7"/>
<circle cx="488" cy="445.3" r="4.7"/>
<circle cx="431.9" cy="552.2" r="4.7"/>
<circle cx="437.4" cy="542.5" r="4.7"/>
<circle cx="480.1" cy="437.1" r="4.7"/>
<circle cx="471.4" cy="455.4" r="4.7"/>
<circle cx="460.1" cy="587.1" r="4.7"/>
<circle cx="482.1" cy="454.6" r="4.7"/>
<circle cx="408.5" cy="535.5" r="4.7"/>
<circle cx="462.7" cy="578.1" r="4.7"/>
<circle cx="457.3" cy="569.3" r="4.7"/>
<circle cx="417.6" cy="533.9" r="4.7"/>
<circle cx="465.7" cy="595.3" r="4.7"/>
<circle cx="465.4" cy="445.8" r="4.7"/>
<circle cx="452.3" cy="577.5" r="4.7"/>
<circle cx="578.8" cy="569" r="4.7"/>
<circle cx="438.9" cy="560.1" r="4.7"/>
<circle cx="424.5" cy="543.5" r="4.7"/>
<circle cx="478.4" cy="614.3" r="4.7"/>
<circle cx="582.5" cy="437.7" r="4.7"/>
<circle cx="422.8" cy="526.1" r="4.7"/>
<circle cx="405.5" cy="516.3" r="4.7"/>
<circle cx="575.8" cy="578.5" r="4.7"/>
<circle cx="471.4" cy="605.6" r="4.7"/>
<circle cx="411.5" cy="525" r="4.7"/>
<circle cx="444.2" cy="569.5" r="4.7"/>
<circle cx="420.2" cy="552.3" r="4.7"/>
<circle cx="427.9" cy="561.7" r="4.7"/>
<circle cx="569.4" cy="569.3" r="4.7"/>
<circle cx="577.8" cy="446.7" r="4.7"/>
<circle cx="566.6" cy="447.5" r="4.7"/>
<circle cx="567.4" cy="597.2" r="4.7"/>
<circle cx="453" cy="447.4" r="4.7"/>
<circle cx="441.6" cy="579.5" r="4.7"/>
<circle cx="570.7" cy="615.8" r="4.7"/>
<circle cx="449.7" cy="456.4" r="4.7"/>
<circle cx="447.2" cy="587.7" r="4.7"/>
<circle cx="572.5" cy="587.6" r="4.7"/>
<circle cx="430.7" cy="447.7" r="4.7"/>
<circle cx="610.2" cy="490.8" r="4.7"/>
<circle cx="443.4" cy="447.4" r="4.7"/>
<circle cx="555.7" cy="447.7" r="4.7"/>
<circle cx="548.1" cy="438.8" r="4.7"/>
<circle cx="437.6" cy="455.8" r="4.7"/>
<circle cx="563" cy="607.7" r="4.7"/>
<circle cx="562.6" cy="457" r="4.7"/>
<circle cx="556.7" cy="598.9" r="4.7"/>
<circle cx="602.2" cy="509.6" r="4.8"/>
<circle cx="550.7" cy="457.3" r="4.8"/>
<circle cx="604.7" cy="528" r="4.8"/>
<circle cx="544.2" cy="447.8" r="4.8"/>
<circle cx="533.7" cy="448.8" r="4.8"/>
<circle cx="516.7" cy="440.6" r="4.8"/>
<circle cx="598.7" cy="521" r="4.8"/>
<circle cx="594.1" cy="528.1" r="4.8"/>
<circle cx="522.4" cy="448.8" r="4.8"/>
<circle cx="590" cy="538.6" r="4.8"/>
<circle cx="511.4" cy="449.4" r="4.8"/>
<circle cx="442.1" cy="540" r="4.8"/>
<circle cx="506.5" cy="610.3" r="4.8"/>
<circle cx="495.7" cy="459.2" r="4.8"/>
<circle cx="424.5" cy="530.4" r="4.8"/>
<circle cx="507.1" cy="458.1" r="4.8"/>
<circle cx="476.1" cy="584.1" r="4.8"/>
<circle cx="469.2" cy="574.5" r="4.8"/>
<circle cx="592" cy="556.6" r="4.8"/>
<circle cx="417.7" cy="523" r="4.8"/>
<circle cx="585.5" cy="547.5" r="4.8"/>
<circle cx="582" cy="559.1" r="4.8"/>
<circle cx="483.5" cy="594" r="4.8"/>
<circle cx="502.7" cy="620.4" r="4.8"/>
<circle cx="488.9" cy="603.3" r="4.8"/>
<circle cx="429" cy="521.2" r="4.8"/>
<circle cx="500.2" cy="448.5" r="4.8"/>
<circle cx="496" cy="612.4" r="4.8"/>
<circle cx="470.7" cy="442.9" r="4.8"/>
<circle cx="565.7" cy="567.8" r="4.8"/>
<circle cx="470.7" cy="593.9" r="4.8"/>
<circle cx="411.1" cy="513.9" r="4.8"/>
<circle cx="444" cy="557.9" r="4.8"/>
<circle cx="478.1" cy="451.6" r="4.8"/>
<circle cx="596.5" cy="440.8" r="4.8"/>
<circle cx="488.7" cy="450.1" r="4.8"/>
<circle cx="450.8" cy="567.3" r="4.8"/>
<circle cx="461.8" cy="566" r="4.8"/>
<circle cx="587.4" cy="566.8" r="4.8"/>
<circle cx="464" cy="585.7" r="4.8"/>
<circle cx="477.5" cy="603" r="4.8"/>
<circle cx="413.2" cy="531.8" r="4.8"/>
<circle cx="485.5" cy="612.5" r="4.8"/>
<circle cx="485" cy="459.7" r="4.8"/>
<circle cx="436.8" cy="549.6" r="4.8"/>
<circle cx="576.2" cy="568.2" r="4.8"/>
<circle cx="457.2" cy="576.6" r="4.8"/>
<circle cx="579.5" cy="585.8" r="4.8"/>
<circle cx="405.1" cy="521.2" r="4.8"/>
<circle cx="592.4" cy="451.7" r="4.8"/>
<circle cx="430.2" cy="539.6" r="4.8"/>
<circle cx="459.7" cy="441.7" r="4.8"/>
<circle cx="439.7" cy="567.7" r="4.8"/>
<circle cx="426.1" cy="549" r="4.8"/>
<circle cx="491.7" cy="621.6" r="4.8"/>
<circle cx="461.1" cy="460.6" r="4.8"/>
<circle cx="572.2" cy="576.9" r="4.8"/>
<circle cx="446.1" cy="577.7" r="4.8"/>
<circle cx="455.3" cy="452" r="4.8"/>
<circle cx="432.9" cy="558.5" r="4.8"/>
<circle cx="587.9" cy="459.5" r="4.8"/>
<circle cx="453.2" cy="586.8" r="4.8"/>
<circle cx="615.1" cy="496.4" r="4.8"/>
<circle cx="466" cy="451.4" r="4.8"/>
<circle cx="450.9" cy="460.2" r="4.8"/>
<circle cx="581.6" cy="451.3" r="4.8"/>
<circle cx="601.5" cy="479.7" r="4.8"/>
<circle cx="444.7" cy="451.3" r="4.8"/>
<circle cx="570.6" cy="451.4" r="4.8"/>
<circle cx="568.6" cy="587" r="4.8"/>
<circle cx="426.1" cy="443.4" r="4.8"/>
<circle cx="559" cy="453.5" r="4.8"/>
<circle cx="576.9" cy="460.9" r="4.8"/>
<circle cx="439.4" cy="461.2" r="4.8"/>
<circle cx="564.5" cy="597.1" r="4.8"/>
<circle cx="553.5" cy="596.2" r="4.8"/>
<circle cx="432.7" cy="452.1" r="4.8"/>
<circle cx="421.8" cy="452.7" r="4.8"/>
<circle cx="546.1" cy="452" r="4.8"/>
<circle cx="600.4" cy="506.1" r="4.8"/>
<circle cx="559.4" cy="606.7" r="4.8"/>
<circle cx="561.5" cy="470.3" r="4.8"/>
<circle cx="596.1" cy="516.5" r="4.9"/>
<circle cx="593.3" cy="498.1" r="4.9"/>
<circle cx="572.3" cy="469.8" r="4.9"/>
<circle cx="555.1" cy="461.2" r="4.9"/>
<circle cx="550.3" cy="626.2" r="4.9"/>
<circle cx="416.4" cy="462.2" r="4.9"/>
<circle cx="536.1" cy="452.5" r="4.9"/>
<circle cx="586.4" cy="535.8" r="4.9"/>
<circle cx="543.5" cy="462.3" r="4.9"/>
<circle cx="555.3" cy="615.6" r="4.9"/>
<circle cx="590.3" cy="525.8" r="4.9"/>
<circle cx="533.2" cy="462.3" r="4.9"/>
<circle cx="598.4" cy="535.5" r="4.9"/>
<circle cx="437.1" cy="537.2" r="4.9"/>
<circle cx="514.8" cy="453.9" r="4.9"/>
<circle cx="507.2" cy="599.8" r="4.9"/>
<circle cx="401.5" cy="490.3" r="4.9"/>
<circle cx="593.8" cy="544.9" r="4.9"/>
<circle cx="525.4" cy="452.9" r="4.9"/>
<circle cx="486.9" cy="572.4" r="4.9"/>
<circle cx="473.5" cy="573.4" r="4.9"/>
<circle cx="439.3" cy="527" r="4.9"/>
<circle cx="414.1" cy="509.2" r="4.9"/>
<circle cx="519.3" cy="462.6" r="4.9"/>
<circle cx="581.9" cy="544.2" r="4.9"/>
<circle cx="428.9" cy="526.7" r="4.9"/>
<circle cx="427.4" cy="509.2" r="4.9"/>
<circle cx="456.3" cy="564" r="4.9"/>
<circle cx="516.5" cy="628.6" r="4.9"/>
<circle cx="510.3" cy="619" r="4.9"/>
<circle cx="450.2" cy="554.7" r="4.9"/>
<circle cx="490.8" cy="454.7" r="4.9"/>
<circle cx="488.8" cy="590.6" r="4.9"/>
<circle cx="481.9" cy="581.5" r="4.9"/>
<circle cx="619.4" cy="455.2" r="4.9"/>
<circle cx="408.3" cy="500.5" r="4.9"/>
<circle cx="502.4" cy="454.3" r="4.9"/>
<circle cx="433.8" cy="519.3" r="4.9"/>
<circle cx="497" cy="463.4" r="4.9"/>
<circle cx="504.4" cy="628.9" r="4.9"/>
<circle cx="502.6" cy="610.4" r="4.9"/>
<circle cx="621.1" cy="473.8" r="4.9"/>
<circle cx="443.4" cy="545.9" r="4.9"/>
<circle cx="508.5" cy="464.2" r="4.9"/>
<circle cx="495.9" cy="601.2" r="4.9"/>
<circle cx="497.9" cy="620.8" r="4.9"/>
<circle cx="613.6" cy="465.4" r="4.9"/>
<circle cx="484.1" cy="445.2" r="4.9"/>
<circle cx="421.9" cy="517.7" r="4.9"/>
<circle cx="417.4" cy="527.6" r="4.9"/>
<circle cx="579.8" cy="574.2" r="4.9"/>
<circle cx="574.4" cy="565.5" r="4.9"/>
<circle cx="424.8" cy="537.6" r="4.9"/>
<circle cx="459.6" cy="583.5" r="4.9"/>
<circle cx="478.5" cy="455.7" r="4.9"/>
<circle cx="577.7" cy="556.1" r="4.9"/>
<circle cx="438.6" cy="556.1" r="4.9"/>
<circle cx="472.5" cy="446.4" r="4.9"/>
<circle cx="464" cy="572.4" r="4.9"/>
<circle cx="585.8" cy="564.6" r="4.9"/>
<circle cx="452.3" cy="574.4" r="4.9"/>
<circle cx="491.5" cy="609.6" r="4.9"/>
<circle cx="472.3" cy="603.1" r="4.9"/>
<circle cx="595.8" cy="455.9" r="4.9"/>
<circle cx="466.4" cy="593.3" r="4.9"/>
<circle cx="445.2" cy="564.9" r="4.9"/>
<circle cx="483.8" cy="601.7" r="4.9"/>
<circle cx="486.8" cy="464.6" r="4.9"/>
<circle cx="617.8" cy="483.9" r="4.9"/>
<circle cx="564.4" cy="584.2" r="4.9"/>
<circle cx="520.7" cy="618.6" r="4.9"/>
<circle cx="477.6" cy="592.3" r="4.9"/>
<circle cx="470.2" cy="583.1" r="4.9"/>
<circle cx="591.5" cy="466.9" r="4.9"/>
<circle cx="576.6" cy="583.7" r="4.9"/>
<circle cx="585.2" cy="456.1" r="4.9"/>
<circle cx="486.1" cy="621.1" r="4.9"/>
<circle cx="467.9" cy="456.8" r="4.9"/>
<circle cx="610.5" cy="475.3" r="4.9"/>
<circle cx="456.5" cy="456.5" r="4.9"/>
<circle cx="568" cy="575.9" r="4.9"/>
<circle cx="463.2" cy="466.2" r="4.9"/>
<circle cx="451.1" cy="466.2" r="4.9"/>
<circle cx="450.8" cy="446.7" r="4.9"/>
<circle cx="561.6" cy="457.6" r="4.9"/>
<circle cx="574.5" cy="456.8" r="4.9"/>
<circle cx="558.8" cy="575.5" r="4.9"/>
<circle cx="559.4" cy="595.2" r="4.9"/>
<circle cx="432.9" cy="456.5" r="4.9"/>
<circle cx="571.1" cy="595.4" r="4.9"/>
<circle cx="438.8" cy="466.8" r="4.9"/>
<circle cx="607.5" cy="502.8" r="4.9"/>
<circle cx="601.3" cy="494" r="4.9"/>
<circle cx="597.1" cy="502.7" r="4.9"/>
<circle cx="443.6" cy="456.5" r="4.9"/>
<circle cx="557.5" cy="466.3" r="4.9"/>
<circle cx="568.8" cy="466.4" r="4.9"/>
<circle cx="427.5" cy="466.7" r="4.9"/>
<circle cx="414.2" cy="447.6" r="4.9"/>
<circle cx="539.9" cy="457.7" r="4.9"/>
<circle cx="592.8" cy="513.4" r="5"/>
<circle cx="550.8" cy="614.7" r="5"/>
<circle cx="421.9" cy="458.8" r="5"/>
<circle cx="549.6" cy="457" r="5"/>
<circle cx="416.1" cy="467.2" r="5"/>
<circle cx="527.4" cy="458.1" r="5"/>
<circle cx="441.8" cy="534.2" r="5"/>
<circle cx="408.8" cy="458.4" r="5"/>
<circle cx="554.8" cy="604.2" r="5"/>
<circle cx="520.9" cy="449.1" r="5"/>
<circle cx="446.6" cy="523.4" r="5"/>
<circle cx="558.2" cy="624.4" r="5"/>
<circle cx="588" cy="524.4" r="5"/>
<circle cx="545" cy="466.4" r="5"/>
<circle cx="517.5" cy="458.5" r="5"/>
<circle cx="418" cy="485.3" r="5"/>
<circle cx="532.4" cy="448.7" r="5"/>
<circle cx="514.5" cy="598.9" r="5"/>
<circle cx="534.2" cy="467.2" r="5"/>
<circle cx="506.9" cy="587.9" r="5"/>
<circle cx="433.3" cy="505.5" r="5"/>
<circle cx="405" cy="467.4" r="5"/>
<circle cx="521.2" cy="606.9" r="5"/>
<circle cx="547.2" cy="625.3" r="5"/>
<circle cx="420.3" cy="505.8" r="5"/>
<circle cx="413.6" cy="496.1" r="5"/>
<circle cx="410.8" cy="477.1" r="5"/>
<circle cx="474.7" cy="562.2" r="5"/>
<circle cx="480.6" cy="569.9" r="5"/>
<circle cx="536.3" cy="625.4" r="5"/>
<circle cx="502.9" cy="598.2" r="5"/>
<circle cx="579" cy="543.3" r="5"/>
<circle cx="454.5" cy="553" r="5"/>
<circle cx="595" cy="531.6" r="5"/>
<circle cx="543" cy="635.8" r="5"/>
<circle cx="426.7" cy="513.9" r="5"/>
<circle cx="508.7" cy="607.8" r="5"/>
<circle cx="407.5" cy="487" r="5"/>
<circle cx="504.4" cy="617.7" r="5"/>
<circle cx="462.6" cy="561.7" r="5"/>
<circle cx="522.2" cy="468.1" r="5"/>
<circle cx="467.3" cy="552.8" r="5"/>
<circle cx="469.6" cy="571.4" r="5"/>
<circle cx="583.2" cy="532.9" r="5"/>
<circle cx="516" cy="617.1" r="5"/>
<circle cx="448.4" cy="542.6" r="5"/>
<circle cx="502.8" cy="459.9" r="5"/>
<circle cx="623.6" cy="460.5" r="5"/>
<circle cx="511" cy="469.2" r="5"/>
<circle cx="498.4" cy="608.6" r="5"/>
<circle cx="409.7" cy="506.6" r="5"/>
<circle cx="400.8" cy="498.5" r="5"/>
<circle cx="491.6" cy="459.1" r="5"/>
<circle cx="566.3" cy="543.4" r="5"/>
<circle cx="480" cy="459.7" r="5"/>
<circle cx="435.2" cy="524.1" r="5"/>
<circle cx="530.5" cy="635.1" r="5"/>
<circle cx="491.3" cy="598.7" r="5"/>
<circle cx="512.2" cy="626.8" r="5"/>
<circle cx="483.8" cy="589.6" r="5"/>
<circle cx="430.4" cy="533.6" r="5"/>
<circle cx="476.6" cy="579.9" r="5"/>
<circle cx="499.8" cy="469.7" r="5"/>
<circle cx="415.2" cy="515.5" r="5"/>
<circle cx="450.6" cy="561.6" r="5"/>
<circle cx="582" cy="562.4" r="5"/>
<circle cx="492.7" cy="619.1" r="5"/>
<circle cx="573.9" cy="553.8" r="5"/>
<circle cx="488.7" cy="469" r="5"/>
<circle cx="604" cy="450.9" r="5"/>
<circle cx="571" cy="562.4" r="5"/>
<circle cx="573.2" cy="582.3" r="5"/>
<circle cx="600.8" cy="460.6" r="5"/>
<circle cx="593.4" cy="450.4" r="5"/>
<circle cx="612.3" cy="460.6" r="5"/>
<circle cx="614" cy="480.1" r="5"/>
<circle cx="475.7" cy="469.4" r="5"/>
<circle cx="469.3" cy="459.8" r="5"/>
<circle cx="456.2" cy="460.5" r="5"/>
<circle cx="554.3" cy="573.9" r="5"/>
<circle cx="565.8" cy="572.6" r="5"/>
<circle cx="607.3" cy="470.1" r="5"/>
<circle cx="426.7" cy="452.9" r="5"/>
<circle cx="619" cy="469.3" r="5"/>
<circle cx="610.3" cy="488.7" r="5"/>
<circle cx="561" cy="582.6" r="5"/>
<circle cx="588.6" cy="461.5" r="5"/>
<circle cx="583.6" cy="471.3" r="5"/>
<circle cx="579.1" cy="461.7" r="5"/>
<circle cx="445.3" cy="461.1" r="5"/>
<circle cx="604.1" cy="480.4" r="5"/>
<circle cx="605.8" cy="499.4" r="5"/>
<circle cx="570.5" cy="452.8" r="5"/>
<circle cx="556.5" cy="593.4" r="5"/>
<circle cx="432.4" cy="462.1" r="5"/>
<circle cx="546.2" cy="452.9" r="5"/>
<circle cx="563.9" cy="603" r="5"/>
<circle cx="552.4" cy="603.3" r="5"/>
<circle cx="572.9" cy="472.9" r="5"/>
<circle cx="528.3" cy="606" r="5"/>
<circle cx="558.6" cy="611.9" r="5"/>
<circle cx="421.7" cy="462.6" r="5"/>
<circle cx="594.3" cy="500.7" r="5"/>
<circle cx="560.9" cy="472.5" r="5.1"/>
<circle cx="566.3" cy="462.3" r="5.1"/>
<circle cx="586.8" cy="489.9" r="5.1"/>
<circle cx="553.7" cy="463.1" r="5.1"/>
<circle cx="417.3" cy="472.6" r="5.1"/>
<circle cx="547.4" cy="614.1" r="5.1"/>
<circle cx="431.6" cy="491.7" r="5.1"/>
<circle cx="428.1" cy="471.2" r="5.1"/>
<circle cx="521" cy="594.6" r="5.1"/>
<circle cx="410.4" cy="462.9" r="5.1"/>
<circle cx="445.6" cy="511.2" r="5.1"/>
<circle cx="507.2" cy="577" r="5.1"/>
<circle cx="494.9" cy="577.2" r="5.1"/>
<circle cx="542.1" cy="622.7" r="5.1"/>
<circle cx="588.7" cy="509.5" r="5.1"/>
<circle cx="584" cy="520.4" r="5.1"/>
<circle cx="534.7" cy="453.1" r="5.1"/>
<circle cx="546.6" cy="644.3" r="5.1"/>
<circle cx="538.2" cy="473.3" r="5.1"/>
<circle cx="577.6" cy="510.6" r="5.1"/>
<circle cx="423.4" cy="481.9" r="5.1"/>
<circle cx="436.4" cy="501.2" r="5.1"/>
<circle cx="455" cy="539.5" r="5.1"/>
<circle cx="476.5" cy="567.9" r="5.1"/>
<circle cx="410.9" cy="482.5" r="5.1"/>
<circle cx="550.2" cy="471.8" r="5.1"/>
<circle cx="526.6" cy="473.2" r="5.1"/>
<circle cx="483" cy="578.3" r="5.1"/>
<circle cx="530.1" cy="463.3" r="5.1"/>
<circle cx="407.2" cy="493.2" r="5.1"/>
<circle cx="474.3" cy="548.6" r="5.1"/>
<circle cx="480.7" cy="558.9" r="5.1"/>
<circle cx="579.4" cy="530.2" r="5.1"/>
<circle cx="447.5" cy="530" r="5.1"/>
<circle cx="549.2" cy="635.1" r="5.1"/>
<circle cx="516.2" cy="606.4" r="5.1"/>
<circle cx="538.7" cy="634.9" r="5.1"/>
<circle cx="404.8" cy="472.6" r="5.1"/>
<circle cx="418.8" cy="491.4" r="5.1"/>
<circle cx="461.7" cy="549.9" r="5.1"/>
<circle cx="504.8" cy="606.6" r="5.1"/>
<circle cx="433.1" cy="510.4" r="5.1"/>
<circle cx="518.3" cy="464.2" r="5.1"/>
<circle cx="530.8" cy="625.1" r="5.1"/>
<circle cx="497.6" cy="597.2" r="5.1"/>
<circle cx="509.9" cy="595.1" r="5.1"/>
<circle cx="587.8" cy="540.4" r="5.1"/>
<circle cx="487.9" cy="568" r="5.1"/>
<circle cx="525" cy="634.2" r="5.1"/>
<circle cx="397.5" cy="464.3" r="5.1"/>
<circle cx="507.1" cy="465.1" r="5.1"/>
<circle cx="440.7" cy="521.1" r="5.1"/>
<circle cx="490.2" cy="587.1" r="5.1"/>
<circle cx="425.9" cy="502.5" r="5.1"/>
<circle cx="524.2" cy="616.1" r="5.1"/>
<circle cx="421.3" cy="511.7" r="5.1"/>
<circle cx="501.2" cy="586" r="5.1"/>
<circle cx="391.5" cy="473.7" r="5.1"/>
<circle cx="532.6" cy="645.8" r="5.1"/>
<circle cx="459.7" cy="528.6" r="5.1"/>
<circle cx="467.9" cy="558.6" r="5.1"/>
<circle cx="518.9" cy="626.1" r="5.1"/>
<circle cx="436" cy="530.1" r="5.1"/>
<circle cx="512.6" cy="615.2" r="5.1"/>
<circle cx="583.6" cy="550.2" r="5.1"/>
<circle cx="414.9" cy="502.5" r="5.1"/>
<circle cx="450" cy="549.2" r="5.1"/>
<circle cx="456.5" cy="559.9" r="5.1"/>
<circle cx="570.7" cy="551.2" r="5.1"/>
<circle cx="564" cy="540" r="5.1"/>
<circle cx="576.7" cy="539.2" r="5.1"/>
<circle cx="502.3" cy="474.5" r="5.1"/>
<circle cx="492.1" cy="607.6" r="5.1"/>
<circle cx="506.4" cy="627.4" r="5.1"/>
<circle cx="521.5" cy="646" r="5.1"/>
<circle cx="472.6" cy="578" r="5.1"/>
<circle cx="513.5" cy="636.6" r="5.1"/>
<circle cx="489.6" cy="475.2" r="5.1"/>
<circle cx="499.5" cy="616.6" r="5.1"/>
<circle cx="604.4" cy="465.7" r="5.1"/>
<circle cx="477.6" cy="475.7" r="5.1"/>
<circle cx="482.5" cy="465.8" r="5.1"/>
<circle cx="458.5" cy="466.1" r="5.1"/>
<circle cx="494.8" cy="464.2" r="5.1"/>
<circle cx="463.9" cy="455.5" r="5.1"/>
<circle cx="565.1" cy="561.2" r="5.1"/>
<circle cx="607.2" cy="485.6" r="5.1"/>
<circle cx="562.3" cy="571.2" r="5.1"/>
<circle cx="609.4" cy="454.4" r="5.1"/>
<circle cx="471.3" cy="465.1" r="5.1"/>
<circle cx="557.3" cy="581.6" r="5.1"/>
<circle cx="466.3" cy="474.7" r="5.1"/>
<circle cx="594.1" cy="466.1" r="5.1"/>
<circle cx="454.5" cy="474.6" r="5.1"/>
<circle cx="446.5" cy="466" r="5.1"/>
<circle cx="581.3" cy="465.7" r="5.1"/>
<circle cx="553.2" cy="591.6" r="5.1"/>
<circle cx="600.7" cy="477.1" r="5.1"/>
<circle cx="595.6" cy="486.5" r="5.1"/>
<circle cx="564.7" cy="590.6" r="5.1"/>
<circle cx="427.8" cy="457.8" r="5.1"/>
<circle cx="434.5" cy="467.3" r="5.1"/>
<circle cx="590.4" cy="497.1" r="5.2"/>
<circle cx="565.2" cy="477.3" r="5.2"/>
<circle cx="528.9" cy="592.3" r="5.2"/>
<circle cx="422.5" cy="468.2" r="5.2"/>
<circle cx="586.1" cy="507" r="5.2"/>
<circle cx="568.9" cy="467.7" r="5.2"/>
<circle cx="549" cy="601.2" r="5.2"/>
<circle cx="593.3" cy="517.1" r="5.2"/>
<circle cx="429.7" cy="477.8" r="5.2"/>
<circle cx="544.7" cy="468.7" r="5.2"/>
<circle cx="523.3" cy="603.8" r="5.2"/>
<circle cx="475.3" cy="556" r="5.2"/>
<circle cx="465.9" cy="524.5" r="5.2"/>
<circle cx="432.3" cy="497.2" r="5.2"/>
<circle cx="447.5" cy="517.6" r="5.2"/>
<circle cx="501.2" cy="574.8" r="5.2"/>
<circle cx="557.6" cy="467.4" r="5.2"/>
<circle cx="423.5" cy="488.2" r="5.2"/>
<circle cx="597.5" cy="506.4" r="5.2"/>
<circle cx="493.7" cy="564.7" r="5.2"/>
<circle cx="537.8" cy="623.2" r="5.2"/>
<circle cx="532.9" cy="469" r="5.2"/>
<circle cx="419.3" cy="498.7" r="5.2"/>
<circle cx="436.5" cy="488.1" r="5.2"/>
<circle cx="416.5" cy="476.9" r="5.2"/>
<circle cx="553" cy="478" r="5.2"/>
<circle cx="398.9" cy="469.1" r="5.2"/>
<circle cx="438.6" cy="507.1" r="5.2"/>
<circle cx="542.6" cy="612.8" r="5.2"/>
<circle cx="505.7" cy="594.1" r="5.2"/>
<circle cx="404.2" cy="479.7" r="5.2"/>
<circle cx="510.3" cy="584.7" r="5.2"/>
<circle cx="452.7" cy="526.4" r="5.2"/>
<circle cx="468.3" cy="545.3" r="5.2"/>
<circle cx="482.5" cy="566.2" r="5.2"/>
<circle cx="409.8" cy="467.1" r="5.2"/>
<circle cx="402.5" cy="458.6" r="5.2"/>
<circle cx="539.4" cy="478.7" r="5.2"/>
<circle cx="531.7" cy="614.1" r="5.2"/>
<circle cx="470.6" cy="566.4" r="5.2"/>
<circle cx="582" cy="517.5" r="5.2"/>
<circle cx="516.6" cy="593.6" r="5.2"/>
<circle cx="541.2" cy="642.2" r="5.2"/>
<circle cx="525.7" cy="623.5" r="5.2"/>
<circle cx="456" cy="547.2" r="5.2"/>
<circle cx="497.9" cy="584.4" r="5.2"/>
<circle cx="461.3" cy="535.8" r="5.2"/>
<circle cx="463.2" cy="556.5" r="5.2"/>
<circle cx="518.7" cy="614.3" r="5.2"/>
<circle cx="412.9" cy="488" r="5.2"/>
<circle cx="491.1" cy="573.9" r="5.2"/>
<circle cx="513" cy="605" r="5.2"/>
<circle cx="577.3" cy="528" r="5.2"/>
<circle cx="533.4" cy="634.2" r="5.2"/>
<circle cx="520.6" cy="469.7" r="5.2"/>
<circle cx="448.6" cy="537.2" r="5.2"/>
<circle cx="485.9" cy="584.6" r="5.2"/>
<circle cx="572.8" cy="537.4" r="5.2"/>
<circle cx="535.9" cy="654.2" r="5.2"/>
<circle cx="585.5" cy="536.9" r="5.2"/>
<circle cx="521.6" cy="634.4" r="5.2"/>
<circle cx="496.8" cy="470.1" r="5.2"/>
<circle cx="492.3" cy="596.8" r="5.2"/>
<circle cx="509.4" cy="470.9" r="5.2"/>
<circle cx="560.3" cy="538.4" r="5.2"/>
<circle cx="510.9" cy="489.9" r="5.2"/>
<circle cx="574.4" cy="557.9" r="5.2"/>
<circle cx="566.9" cy="546.7" r="5.2"/>
<circle cx="563.9" cy="558.6" r="5.2"/>
<circle cx="476.8" cy="461.5" r="5.2"/>
<circle cx="492.8" cy="480.1" r="5.2"/>
<circle cx="503.7" cy="479.8" r="5.2"/>
<circle cx="484.3" cy="469.2" r="5.2"/>
<circle cx="479.7" cy="481.2" r="5.2"/>
<circle cx="602.8" cy="460.7" r="5.2"/>
<circle cx="565.9" cy="579.5" r="5.2"/>
<circle cx="472.5" cy="472.5" r="5.2"/>
<circle cx="459.9" cy="471.3" r="5.2"/>
<circle cx="597.5" cy="472.2" r="5.2"/>
<circle cx="448.5" cy="472" r="5.2"/>
<circle cx="455.9" cy="482.3" r="5.2"/>
<circle cx="559.3" cy="569.4" r="5.2"/>
<circle cx="578.1" cy="462.4" r="5.2"/>
<circle cx="553.3" cy="579.7" r="5.2"/>
<circle cx="599.9" cy="491.5" r="5.3"/>
<circle cx="540.8" cy="581.7" r="5.3"/>
<circle cx="560.1" cy="590.1" r="5.3"/>
<circle cx="592.6" cy="482" r="5.3"/>
<circle cx="435.1" cy="472.9" r="5.3"/>
<circle cx="548.9" cy="589.5" r="5.3"/>
<circle cx="584.8" cy="472.6" r="5.3"/>
<circle cx="442.6" cy="482.3" r="5.3"/>
<circle cx="466.8" cy="481.2" r="5.3"/>
<circle cx="470.8" cy="522.6" r="5.3"/>
<circle cx="552.1" cy="610.5" r="5.3"/>
<circle cx="588.4" cy="491.9" r="5.3"/>
<circle cx="580.1" cy="481.6" r="5.3"/>
<circle cx="451.6" cy="512" r="5.3"/>
<circle cx="509" cy="570.8" r="5.3"/>
<circle cx="572.7" cy="473.4" r="5.3"/>
<circle cx="524.2" cy="591.1" r="5.3"/>
<circle cx="445.3" cy="503.1" r="5.3"/>
<circle cx="429.9" cy="483.5" r="5.3"/>
<circle cx="489" cy="563.1" r="5.3"/>
<circle cx="539.4" cy="612" r="5.3"/>
<circle cx="541.1" cy="464.2" r="5.3"/>
<circle cx="579" cy="514" r="5.3"/>
<circle cx="474" cy="542.4" r="5.3"/>
<circle cx="466.9" cy="532.9" r="5.3"/>
<circle cx="459.7" cy="522.3" r="5.3"/>
<circle cx="482" cy="552.7" r="5.3"/>
<circle cx="423.7" cy="473.8" r="5.3"/>
<circle cx="512.8" cy="590.9" r="5.3"/>
<circle cx="505.2" cy="582.9" r="5.3"/>
<circle cx="591" cy="513.5" r="5.3"/>
<circle cx="493.6" cy="551.5" r="5.3"/>
<circle cx="425.4" cy="493.7" r="5.3"/>
<circle cx="516.8" cy="581.2" r="5.3"/>
<circle cx="532.6" cy="600.6" r="5.3"/>
<circle cx="502.1" cy="562" r="5.3"/>
<circle cx="542.2" cy="632.3" r="5.3"/>
<circle cx="575.5" cy="493.2" r="5.3"/>
<circle cx="543.4" cy="600.2" r="5.3"/>
<circle cx="437" cy="492.9" r="5.3"/>
<circle cx="535.9" cy="474.4" r="5.3"/>
<circle cx="460.5" cy="544.3" r="5.3"/>
<circle cx="582.8" cy="502" r="5.3"/>
<circle cx="454.8" cy="532.1" r="5.3"/>
<circle cx="440.2" cy="514.4" r="5.3"/>
<circle cx="526.4" cy="611.8" r="5.3"/>
<circle cx="556.2" cy="484.6" r="5.3"/>
<circle cx="529.2" cy="631.6" r="5.3"/>
<circle cx="492.1" cy="583.1" r="5.3"/>
<circle cx="498.2" cy="593.2" r="5.3"/>
<circle cx="518.9" cy="601.8" r="5.3"/>
<circle cx="496.7" cy="573" r="5.3"/>
<circle cx="524.8" cy="474.5" r="5.3"/>
<circle cx="568.6" cy="535" r="5.3"/>
<circle cx="533.3" cy="620.9" r="5.3"/>
<circle cx="561.9" cy="525.2" r="5.3"/>
<circle cx="576.8" cy="545.3" r="5.3"/>
<circle cx="531.2" cy="484.2" r="5.3"/>
<circle cx="516.6" cy="463.4" r="5.3"/>
<circle cx="512.1" cy="475.5" r="5.3"/>
<circle cx="563.4" cy="545.7" r="5.3"/>
<circle cx="498.3" cy="475" r="5.3"/>
<circle cx="557.7" cy="535" r="5.3"/>
<circle cx="513.7" cy="496.8" r="5.3"/>
<circle cx="493.5" cy="486.5" r="5.3"/>
<circle cx="466.1" cy="467.2" r="5.3"/>
<circle cx="485.9" cy="476.7" r="5.3"/>
<circle cx="559.9" cy="555.9" r="5.3"/>
<circle cx="605.8" cy="466.2" r="5.3"/>
<circle cx="473.7" cy="477.8" r="5.3"/>
<circle cx="461.7" cy="477.7" r="5.4"/>
<circle cx="594.4" cy="467.9" r="5.4"/>
<circle cx="453.9" cy="467.3" r="5.4"/>
<circle cx="602.8" cy="477.4" r="5.4"/>
<circle cx="597" cy="488.9" r="5.4"/>
<circle cx="450.7" cy="498.8" r="5.4"/>
<circle cx="554.7" cy="566.5" r="5.4"/>
<circle cx="442" cy="468.4" r="5.4"/>
<circle cx="468.3" cy="487.6" r="5.4"/>
<circle cx="583.2" cy="488.6" r="5.4"/>
<circle cx="516.6" cy="568.5" r="5.4"/>
<circle cx="457.4" cy="487.8" r="5.4"/>
<circle cx="436.5" cy="478.2" r="5.4"/>
<circle cx="536.2" cy="577.5" r="5.4"/>
<circle cx="590" cy="479.6" r="5.4"/>
<circle cx="464.5" cy="498.6" r="5.4"/>
<circle cx="551.2" cy="578.5" r="5.4"/>
<circle cx="531.7" cy="588.9" r="5.4"/>
<circle cx="493.6" cy="538.2" r="5.4"/>
<circle cx="544.5" cy="589.3" r="5.4"/>
<circle cx="503.6" cy="570.3" r="5.4"/>
<circle cx="576.7" cy="477.8" r="5.4"/>
<circle cx="439" cy="500.1" r="5.4"/>
<circle cx="447.5" cy="478.2" r="5.4"/>
<circle cx="444.2" cy="488.4" r="5.4"/>
<circle cx="538.9" cy="598.3" r="5.4"/>
<circle cx="457.3" cy="508.4" r="5.4"/>
<circle cx="496.9" cy="558.4" r="5.4"/>
<circle cx="491.6" cy="570.1" r="5.4"/>
<circle cx="526.7" cy="600.4" r="5.4"/>
<circle cx="466.9" cy="519" r="5.4"/>
<circle cx="473" cy="530.3" r="5.4"/>
<circle cx="468.8" cy="538.6" r="5.4"/>
<circle cx="513" cy="578.6" r="5.4"/>
<circle cx="581.8" cy="521.9" r="5.4"/>
<circle cx="481.7" cy="539.1" r="5.4"/>
<circle cx="477.4" cy="550.2" r="5.4"/>
<circle cx="557.3" cy="469.9" r="5.4"/>
<circle cx="488.1" cy="549" r="5.4"/>
<circle cx="551.1" cy="479.8" r="5.4"/>
<circle cx="534.2" cy="610.6" r="5.4"/>
<circle cx="454.3" cy="520.2" r="5.4"/>
<circle cx="572.7" cy="489.3" r="5.4"/>
<circle cx="519.8" cy="589.1" r="5.4"/>
<circle cx="560.2" cy="489" r="5.4"/>
<circle cx="485" cy="560" r="5.4"/>
<circle cx="541.9" cy="620.9" r="5.4"/>
<circle cx="562.1" cy="511" r="5.4"/>
<circle cx="575" cy="510.3" r="5.4"/>
<circle cx="539" cy="481" r="5.4"/>
<circle cx="542.1" cy="502.1" r="5.4"/>
<circle cx="529.9" cy="621.2" r="5.4"/>
<circle cx="565.5" cy="530.3" r="5.4"/>
<circle cx="527.9" cy="481.7" r="5.4"/>
<circle cx="535.1" cy="491.1" r="5.4"/>
<circle cx="557" cy="521.2" r="5.4"/>
<circle cx="571.6" cy="521.5" r="5.4"/>
<circle cx="567.3" cy="552.5" r="5.4"/>
<circle cx="514.3" cy="480.1" r="5.4"/>
<circle cx="559.4" cy="543.2" r="5.4"/>
<circle cx="501.5" cy="482.1" r="5.4"/>
<circle cx="551.5" cy="532.2" r="5.4"/>
<circle cx="563.9" cy="563.3" r="5.5"/>
<circle cx="507" cy="491.8" r="5.5"/>
<circle cx="555.4" cy="552" r="5.5"/>
<circle cx="476.1" cy="483.2" r="5.5"/>
<circle cx="497.4" cy="493.4" r="5.5"/>
<circle cx="489.3" cy="482.8" r="5.5"/>
<circle cx="542.2" cy="554.2" r="5.5"/>
<circle cx="471.3" cy="493" r="5.5"/>
<circle cx="550.7" cy="566.6" r="5.5"/>
<circle cx="463.2" cy="484.3" r="5.5"/>
<circle cx="483.6" cy="494.2" r="5.5"/>
<circle cx="450.6" cy="484.6" r="5.5"/>
<circle cx="546.1" cy="574.9" r="5.5"/>
<circle cx="586.6" cy="474.4" r="5.5"/>
<circle cx="540" cy="586.4" r="5.5"/>
<circle cx="493.7" cy="524" r="5.5"/>
<circle cx="473.7" cy="515.4" r="5.5"/>
<circle cx="485.9" cy="514.8" r="5.5"/>
<circle cx="525" cy="567.4" r="5.5"/>
<circle cx="547" cy="596" r="5.5"/>
<circle cx="457" cy="495.3" r="5.5"/>
<circle cx="444.4" cy="494.8" r="5.5"/>
<circle cx="532.1" cy="576.9" r="5.5"/>
<circle cx="504.3" cy="555.8" r="5.5"/>
<circle cx="478.1" cy="503.8" r="5.5"/>
<circle cx="460.5" cy="516.4" r="5.5"/>
<circle cx="465.7" cy="503.6" r="5.5"/>
<circle cx="575.2" cy="497.2" r="5.5"/>
<circle cx="488.6" cy="535.9" r="5.5"/>
<circle cx="499.7" cy="567.5" r="5.5"/>
<circle cx="452.4" cy="505.3" r="5.5"/>
<circle cx="481" cy="524.8" r="5.5"/>
<circle cx="476.4" cy="536.5" r="5.5"/>
<circle cx="573.3" cy="474.7" r="5.5"/>
<circle cx="521.4" cy="576.5" r="5.5"/>
<circle cx="543.2" cy="608.3" r="5.5"/>
<circle cx="492.5" cy="556.9" r="5.5"/>
<circle cx="581.5" cy="485" r="5.5"/>
<circle cx="560.2" cy="474.3" r="5.5"/>
<circle cx="496.8" cy="544.5" r="5.5"/>
<circle cx="527.5" cy="587" r="5.5"/>
<circle cx="513" cy="567.2" r="5.5"/>
<circle cx="481.8" cy="546.8" r="5.5"/>
<circle cx="534.6" cy="597.6" r="5.5"/>
<circle cx="550.8" cy="496.1" r="5.5"/>
<circle cx="547.8" cy="474.4" r="5.5"/>
<circle cx="563.4" cy="496.9" r="5.5"/>
<circle cx="565.6" cy="517.1" r="5.5"/>
<circle cx="568.6" cy="484.4" r="5.5"/>
<circle cx="558" cy="507" r="5.5"/>
<circle cx="534.9" cy="474.9" r="5.5"/>
<circle cx="570.9" cy="506.1" r="5.5"/>
<circle cx="542.8" cy="485.5" r="5.5"/>
<circle cx="554.6" cy="486.8" r="5.5"/>
<circle cx="553.1" cy="518.2" r="5.5"/>
<circle cx="536.8" cy="496.3" r="5.5"/>
<circle cx="574" cy="528" r="5.5"/>
<circle cx="562.1" cy="529" r="5.5"/>
<circle cx="529.1" cy="488.1" r="5.6"/>
<circle cx="522.6" cy="475.1" r="5.6"/>
<circle cx="511.5" cy="497.4" r="5.6"/>
<circle cx="504.3" cy="488.8" r="5.6"/>
<circle cx="499" cy="498.9" r="5.6"/>
<circle cx="556.1" cy="539.5" r="5.6"/>
<circle cx="517.8" cy="486.7" r="5.6"/>
<circle cx="563.1" cy="550.6" r="5.6"/>
<circle cx="552.2" cy="549.8" r="5.6"/>
<circle cx="493.8" cy="510.1" r="5.6"/>
<circle cx="490.9" cy="487.4" r="5.6"/>
<circle cx="478.3" cy="489" r="5.6"/>
<circle cx="548.3" cy="582.6" r="5.6"/>
<circle cx="516.1" cy="540.8" r="5.6"/>
<circle cx="533.5" cy="564.2" r="5.6"/>
<circle cx="553.9" cy="571.8" r="5.6"/>
<circle cx="537.7" cy="551.5" r="5.6"/>
<circle cx="500.8" cy="521.1" r="5.6"/>
<circle cx="479.8" cy="510.2" r="5.6"/>
<circle cx="464.5" cy="488.3" r="5.6"/>
<circle cx="485.5" cy="499.6" r="5.6"/>
<circle cx="504.8" cy="542.2" r="5.6"/>
<circle cx="546.1" cy="561.1" r="5.6"/>
<circle cx="525.5" cy="551.3" r="5.6"/>
<circle cx="519.3" cy="564.2" r="5.6"/>
<circle cx="489.3" cy="520.4" r="5.6"/>
<circle cx="535.3" cy="584.3" r="5.6"/>
<circle cx="483.3" cy="533" r="5.6"/>
<circle cx="512.8" cy="552.9" r="5.6"/>
<circle cx="540.8" cy="573.3" r="5.6"/>
<circle cx="472.6" cy="499.6" r="5.6"/>
<circle cx="529.5" cy="574.1" r="5.6"/>
<circle cx="466.9" cy="510.8" r="5.6"/>
<circle cx="459" cy="500.8" r="5.6"/>
<circle cx="443.7" cy="478.5" r="5.6"/>
<circle cx="474.9" cy="522.4" r="5.6"/>
<circle cx="495.6" cy="531.5" r="5.6"/>
<circle cx="450.6" cy="490.6" r="5.6"/>
<circle cx="490.3" cy="543.1" r="5.6"/>
<circle cx="522.4" cy="584.1" r="5.6"/>
<circle cx="498.8" cy="554" r="5.6"/>
<circle cx="507.7" cy="566" r="5.6"/>
<circle cx="537.2" cy="607.4" r="5.6"/>
<circle cx="549.9" cy="481" r="5.6"/>
<circle cx="581" cy="501" r="5.6"/>
<circle cx="566.3" cy="502.7" r="5.6"/>
<circle cx="571.9" cy="492.1" r="5.6"/>
<circle cx="584.9" cy="491.8" r="5.6"/>
<circle cx="558.9" cy="493.8" r="5.7"/>
<circle cx="564.6" cy="479.4" r="5.7"/>
<circle cx="540.5" cy="504.4" r="5.7"/>
<circle cx="545.5" cy="492.4" r="5.7"/>
<circle cx="553.8" cy="504.2" r="5.7"/>
<circle cx="570.6" cy="524.3" r="5.7"/>
<circle cx="575" cy="513.1" r="5.7"/>
<circle cx="562.5" cy="514.3" r="5.7"/>
<circle cx="525.5" cy="482.5" r="5.7"/>
<circle cx="521" cy="493.9" r="5.7"/>
<circle cx="544" cy="525.4" r="5.7"/>
<circle cx="548.2" cy="514.5" r="5.7"/>
<circle cx="533.6" cy="492.3" r="5.7"/>
<circle cx="559.2" cy="546.4" r="5.7"/>
<circle cx="552.9" cy="536.8" r="5.7"/>
<circle cx="556.5" cy="524.8" r="5.7"/>
<circle cx="512" cy="483.3" r="5.7"/>
<circle cx="529.5" cy="504.9" r="5.7"/>
<circle cx="501.2" cy="506.9" r="5.7"/>
<circle cx="492.6" cy="495.3" r="5.7"/>
<circle cx="535.8" cy="514.1" r="5.7"/>
<circle cx="546.5" cy="547.6" r="5.7"/>
<circle cx="536.9" cy="569.9" r="5.7"/>
<circle cx="538.5" cy="538.1" r="5.7"/>
<circle cx="485.1" cy="484.2" r="5.7"/>
<circle cx="506.7" cy="494.7" r="5.7"/>
<circle cx="526.4" cy="537.3" r="5.7"/>
<circle cx="495.8" cy="515.6" r="5.7"/>
<circle cx="554.1" cy="557.7" r="5.7"/>
<circle cx="534" cy="549" r="5.7"/>
<circle cx="511" cy="538.6" r="5.7"/>
<circle cx="520.1" cy="549.2" r="5.7"/>
<circle cx="487.7" cy="506" r="5.7"/>
<circle cx="540.6" cy="558.4" r="5.7"/>
<circle cx="479.4" cy="496.9" r="5.7"/>
<circle cx="504.8" cy="527.7" r="5.7"/>
<circle cx="482.6" cy="517.8" r="5.7"/>
<circle cx="490.4" cy="528" r="5.7"/>
<circle cx="528.2" cy="560.1" r="5.7"/>
<circle cx="538.1" cy="592.4" r="5.8"/>
<circle cx="500.1" cy="540.4" r="5.8"/>
<circle cx="473.4" cy="506.1" r="5.8"/>
<circle cx="513.9" cy="561.1" r="5.8"/>
<circle cx="505.6" cy="551.5" r="5.8"/>
<circle cx="567.9" cy="486.6" r="5.8"/>
<circle cx="531.3" cy="582" r="5.8"/>
<circle cx="557.2" cy="510" r="5.8"/>
<circle cx="555.2" cy="485.9" r="5.8"/>
<circle cx="571.7" cy="509" r="5.8"/>
<circle cx="550.4" cy="499.7" r="5.8"/>
<circle cx="527.5" cy="490" r="5.8"/>
<circle cx="536" cy="500.9" r="5.8"/>
<circle cx="563" cy="499.1" r="5.8"/>
<circle cx="544.8" cy="509.3" r="5.8"/>
<circle cx="553" cy="523.3" r="5.8"/>
<circle cx="517.6" cy="511.4" r="5.8"/>
<circle cx="531" cy="510.8" r="5.8"/>
<circle cx="521.3" cy="500.4" r="5.8"/>
<circle cx="547.6" cy="532.1" r="5.8"/>
<circle cx="539" cy="522.3" r="5.8"/>
<circle cx="509.5" cy="502.1" r="5.8"/>
<circle cx="504" cy="512.9" r="5.8"/>
<circle cx="519.8" cy="532.6" r="5.9"/>
<circle cx="535.5" cy="557.1" r="5.9"/>
<circle cx="533.7" cy="533.5" r="5.9"/>
<circle cx="512.5" cy="522.8" r="5.9"/>
<circle cx="496.7" cy="501.5" r="5.9"/>
<circle cx="527.5" cy="545.9" r="5.9"/>
<circle cx="551.5" cy="557.3" r="5.9"/>
<circle cx="505.9" cy="535.8" r="5.9"/>
<circle cx="545.1" cy="566.8" r="5.9"/>
<circle cx="542.1" cy="545" r="5.9"/>
<circle cx="522.1" cy="557.9" r="5.9"/>
<circle cx="514.4" cy="545.9" r="5.9"/>
<circle cx="531.9" cy="495.8" r="5.9"/>
<circle cx="539.3" cy="506.7" r="5.9"/>
<circle cx="553" cy="507.3" r="6"/>
<circle cx="546.7" cy="516.9" r="6"/>
<circle cx="543.1" cy="530.4" r="6"/>
<circle cx="525.6" cy="507.5" r="6"/>
<circle cx="550.5" cy="541.3" r="6"/>
<circle cx="533.6" cy="519.8" r="6"/>
<circle cx="528.8" cy="529.6" r="6"/>
<circle cx="538" cy="542.8" r="6"/>
<circle cx="511" cy="508" r="6"/>
<circle cx="532.1" cy="555.3" r="6"/>
<circle cx="521.9" cy="543.3" r="6"/>
<circle cx="498.6" cy="508.9" r="6"/>
<circle cx="514.8" cy="531.9" r="6"/>
<circle cx="520.6" cy="519.8" r="6"/>
<circle cx="507.1" cy="521.5" r="6"/>
<circle cx="546.3" cy="538" r="6.1"/>
<circle cx="543.1" cy="514.9" r="6.1"/>
<circle cx="529.3" cy="515.2" r="6.1"/>
<circle cx="523.7" cy="525.9" r="6.1"/>
<circle cx="538.8" cy="527.8" r="6.1"/>
<circle cx="531.2" cy="538.4" r="6.1"/>
<circle cx="514.8" cy="515.2" r="6.1"/>
<circle cx="518.1" cy="503.9" r="6.1"/>
</g>
<path d="M390.4 459.1L542.2 518.1M542.2 518.1L627.9 450.2M627.9 450.2L491.3 413.2M491.3 413.2L390.4 459.1M390.4 459.1L409.9 582.1M542.2 518.1L536.3 654M627.9 450.2L609.7 570.8M409.9 582.1L536.3 654M536.3 654L609.7 570.8" stroke="#fff" stroke-width="1" fill="none"/>
<g fill="url(#sg)">
<circle cx="482.5" cy="416.7" r="4.3"/>
<circle cx="611.3" cy="560.4" r="4.3"/>
<circle cx="527.5" cy="422.2" r="4.4"/>
<circle cx="420.4" cy="587.8" r="4.4"/>
<circle cx="431.4" cy="594.4" r="4.5"/>
<circle cx="406.3" cy="560.7" r="4.5"/>
<circle cx="455.4" cy="429.5" r="4.5"/>
<circle cx="405" cy="549.8" r="4.6"/>
<circle cx="447.5" cy="434.4" r="4.6"/>
<circle cx="620.3" cy="503.4" r="4.6"/>
<circle cx="582.5" cy="437.7" r="4.7"/>
<circle cx="570.7" cy="615.8" r="4.7"/>
<circle cx="596.5" cy="440.8" r="4.8"/>
<circle cx="426.1" cy="443.4" r="4.8"/>
<circle cx="414.2" cy="447.6" r="4.9"/>
<circle cx="546.6" cy="644.3" r="5.1"/>
<circle cx="391.5" cy="473.7" r="5.1"/>
<circle cx="521.5" cy="646" r="5.1"/>
<circle cx="535.9" cy="654.2" r="5.2"/>
<circle cx="605.8" cy="466.2" r="5.3"/>
<circle cx="443.7" cy="478.5" r="5.6"/>
<circle cx="537.2" cy="607.4" r="5.6"/>
<circle cx="538.1" cy="592.4" r="5.8"/>
</g>
<g fill="none" stroke-width="1"><path d="M382.6 622.7V599.7M379.1 603.7L382.6 599.2L386.1 603.7" stroke="#6e8cd6"/><path d="M382.6 622.7L404.6 631.2M398.6 633.2L404.6 631.2L401.6 625.7" stroke="#ff4545"/><path d="M382.6 622.7L400.6 610.7M394.6 610.7L400.6 610.7L398.6 616.7" stroke="#0a7a0a"/></g><text x="379.6" y="597.7" fill="#6e8cd6" font-family="Liberation Mono" font-size="10">z</text><text x="406.6" y="636.7" fill="#ff4545" font-family="Liberation Mono" font-size="10">x</text><text x="400.6" y="610.7" fill="#0a7a0a" font-family="Liberation Mono" font-size="10">y</text>
</svg>
<div class="vl mono">Perspective</div></div><!-- right panel: tabs -->
<div class="a" style="left:732px;top:109px;width:288px;height:1px;background:#d9d9d9"></div>
<div class="a" style="left:688px;top:87px;width:45px;height:23px;background:#fff;border-left:1px solid #e4e4e4;border-top:1px solid #e4e4e4"></div>
<div class="a" style="left:732px;top:89px;width:44px;height:21px;border:1px solid #d9d9d9;border-right:none"></div>
<div class="a" style="left:775px;top:89px;width:42px;height:21px;border:1px solid #d9d9d9"></div>
<svg class="a" style="left:697px;top:88px" width="16" height="18" viewBox="0 0 16 18" fill="none" stroke="#000" stroke-width="1.700"><circle cx="4" cy="3.500" r="1.700"/><circle cx="4" cy="14.500" r="1.700"/><circle cx="12" cy="5.500" r="1.700"/><path d="M4 5.200V12.800M12 7.200C12 11 4 9.500 4 12.800"/></svg>
<svg class="a" style="left:742px;top:89px;fill:#000" width="18" height="18" viewBox="0 0 24 24"><circle cx="12" cy="12.500" r="3.400"/><path d="M9 2.500L7.170 4.500H3.500c-1.100 0-2 .9-2 2v12.500c0 1.100.9 2 2 2h17c1.100 0 2-.9 2-2V6.500c0-1.100-.9-2-2-2h-3.670L15 2.500H9zm3 15.500c-3.040 0-5.500-2.460-5.500-5.500s2.460-5.500 5.500-5.500 5.500 2.460 5.500 5.500-2.460 5.500-5.500 5.500z"/></svg>
<svg class="a" style="left:787px;top:90px;fill:#000" width="16" height="16" viewBox="0 0 24 24"><path d="M11.990 18.540l-7.370-5.730L3 14.070l9 7 9-7-1.630-1.270-7.380 5.740zM12 16l7.360-5.730L21 9l-9-7-9 7 1.630 1.270L12 16z"/></svg>
<!-- combos -->
<div class="a" style="left:689px;top:113px;width:309px;height:21px;background:#e1e1e1;border:1px solid #adadad"></div>
<div class="a mono" style="left:693px;top:117px">Al_Rede-tension-300K.dump [LAMMPS Dump]</div>
<svg class="a" style="left:983px;top:119px" width="12" height="8" viewBox="0 0 12 8" fill="none" stroke="#444" stroke-width="1.200"><path d="M1.500 1.500L6 6 10.500 1.500"/></svg>
<svg class="a" style="left:1008px;top:114px;fill:#111" width="6" height="16" viewBox="0 0 6 16"><circle cx="3" cy="2.500" r="1.500"/><circle cx="3" cy="8" r="1.500"/><circle cx="3" cy="13.500" r="1.500"/></svg>
<div class="a" style="left:689px;top:138px;width:309px;height:20px;background:#e1e1e1;border:1px solid #adadad"></div>
<div class="a mono" style="left:693px;top:142px">Add modification...</div>
<svg class="a" style="left:983px;top:144px" width="12" height="8" viewBox="0 0 12 8" fill="none" stroke="#444" stroke-width="1.200"><path d="M1.500 1.500L6 6 10.500 1.500"/></svg>
<!-- pipeline list -->
<div class="a" style="left:689px;top:162px;width:1px;height:260px;background:#828790"></div>
<div class="a" style="left:690px;top:162px;width:298px;height:260px;background:#cce8cf;border:1px solid #828790;border-left-color:#f2f7f2;overflow:hidden;font-size:12.8px">
<div class="a" style="left:0;top:0;width:297px;height:1px;background:#f2f7f2"></div>
<div class="a" style="left:0;top:1px;width:297px;height:12px;background:repeating-conic-gradient(#a9b7aa 0% 25%,#c6e0c8 0% 50%) 0 0/2px 2px"></div>
<div class="a mono" style="left:0;top:3px;width:297px;text-align:center;color:#1f2ec8;font-size:9px;letter-spacing:-0.400px;line-height:10px;padding-left:7px">Visual elements</div>
<div class="a" style="left:0;top:64px;width:297px;height:12px;background:repeating-conic-gradient(#a9b7aa 0% 25%,#c6e0c8 0% 50%) 0 0/2px 2px"></div>
<div class="a mono" style="left:0;top:66px;width:297px;text-align:center;color:#1f2ec8;font-size:9px;letter-spacing:-0.400px;line-height:10px;padding-left:7px">Data source</div>
<div class="a" style="left:0;top:76px;width:297px;height:25px;background:#b3cbb5"></div>
<div class="a" style="left:3px;top:19px;width:13px;height:13px;border:1px solid #3a2048;background:#fff"></div>
<svg class="a" style="left:4px;top:20px" width="11" height="11" viewBox="0 0 11 11" fill="none" stroke="#222" stroke-width="1.200"><path d="M1.500 5.500L4.300 8.300 9.700 2.500"/></svg>
<div class="a" style="left:3px;top:45px;width:13px;height:13px;border:1px solid #3a2048;background:#fff"></div>
<svg class="a" style="left:4px;top:46px" width="11" height="11" viewBox="0 0 11 11" fill="none" stroke="#222" stroke-width="1.200"><path d="M1.500 5.500L4.300 8.300 9.700 2.500"/></svg>
<div class="a" style="left:50px;top:18px;line-height:16px;color:#111">Simulation cell</div>
<div class="a" style="left:50px;top:44px;line-height:16px;color:#111">Particles</div>
<div class="a" style="left:31px;top:81px;line-height:16px;color:#111;white-space:pre">Al_Rede-tension-300K.dump [LAMMPS Dump]</div>
<div class="a" style="left:47px;top:107px;line-height:16px;color:#111">Simulation cell</div>
<div class="a" style="left:47px;top:133px;line-height:16px;color:#111">Particle types</div>
<div class="a" style="left:0;top:240px;width:297px;height:18px;background:#f0f0f0"></div>
<div class="a" style="left:17px;top:240px;width:255px;height:18px;background:#cdcdcd"></div>
<svg class="a" style="left:5px;top:245px" width="8" height="10" viewBox="0 0 8 10" fill="none" stroke="#555" stroke-width="1.600"><path d="M6 1L2 5 6 9"/></svg>
<svg class="a" style="left:283px;top:245px" width="8" height="10" viewBox="0 0 8 10" fill="none" stroke="#555" stroke-width="1.600"><path d="M2 1L6 5 2 9"/></svg>
</div>
<!-- side buttons -->
<svg class="a" style="left:994px;top:165px;fill:#848484" width="22" height="22" viewBox="0 0 24 24"><path d="M6 19c0 1.100.9 2 2 2h8c1.100 0 2-.9 2-2V7H6v12zM19 4h-3.500l-1-1h-5l-1 1H5v2h14V4z"/></svg>
<div class="a" style="left:993px;top:194px;width:26px;height:1px;background:#d4d4d4"></div>
<svg class="a" style="left:998px;top:208px" width="14" height="10" viewBox="0 0 14 10" fill="none" stroke="#848484" stroke-width="1.800"><path d="M1.500 8L7 2.500 12.500 8"/></svg>
<svg class="a" style="left:998px;top:237px" width="14" height="10" viewBox="0 0 14 10" fill="none" stroke="#848484" stroke-width="1.800"><path d="M1.500 2L7 7.500 12.500 2"/></svg>
<div class="a" style="left:993px;top:260px;width:26px;height:1px;background:#d4d4d4"></div>
<svg class="a" style="left:996px;top:270px" width="18" height="19" viewBox="0 0 18 19" fill="none" stroke="#848484" stroke-width="1.400"><path d="M13 1H2.500C1.700 1 1 1.700 1 2.500V14"/><rect x="4.500" y="4.500" width="12.500" height="13.500" rx="1.500"/></svg>
<svg class="a" style="left:995px;top:297px;fill:#484848" width="20" height="22" viewBox="2 0 20 22"><path d="M19 3h-4.180C14.400 1.840 13.300 1 12 1c-1.300 0-2.400.840-2.820 2H5c-1.100 0-2 .9-2 2v14c0 1.100.9 2 2 2h14c1.100 0 2-.9 2-2V5c0-1.100-.9-2-2-2zm-7 0c.550 0 1 .450 1 1s-.450 1-1 1-1-.450-1-1 .450-1 1-1zm2 14H7v-2h7v2zm3-4H7v-2h10v2zm0-4H7V7h10v2z"/></svg>
<!-- External file rollout -->
<div class="a" style="left:689px;top:430px;width:315px;height:320px;border-left:1px solid #cfcfcf;border-right:1px solid #cfcfcf"></div>
<div class="a" style="left:689px;top:429px;width:315px;height:16px;background:#808080;border:1px solid #111"></div>
<div class="a" style="left:989px;top:430px;width:14px;height:14px;background:#555;border-left:1px solid #222"></div>
<div class="a mono" style="left:689px;top:432px;width:299px;text-align:center;color:#fff">External file</div>
<div class="a mono" style="left:993px;top:432px;color:#fff">?</div>
<!-- vertical scrollbar -->
<div class="a" style="left:1005px;top:428px;width:15px;height:322px;background:#f0f0f0"></div>
<div class="a" style="left:1005px;top:445px;width:15px;height:174px;background:#cdcdcd"></div>
<svg class="a" style="left:1008px;top:432px" width="10" height="8" viewBox="0 0 10 8" fill="none" stroke="#555" stroke-width="1.600"><path d="M1 6L5 2 9 6"/></svg>
<svg class="a" style="left:1008px;top:736px" width="10" height="8" viewBox="0 0 10 8" fill="none" stroke="#555" stroke-width="1.600"><path d="M1 2L5 6 9 2"/></svg>
<!-- icon row -->
<svg class="ic" style="left:696px;top:454px" width="23" height="21" viewBox="0 0 24 22"><path d="M2.200 2.500h6.300l2.300 2.600h7.400c.7 0 1.200.5 1.200 1.200v2.200H7.300c-.8 0-1.500.4-1.900 1.100L1 17.500V3.700c0-.7.5-1.200 1.200-1.200z"/><path d="M7.400 10h15.400c.5 0 .8.5.5.9l-4.400 7.900c-.2.400-.6.700-1.100.7H2.200c-.4 0-.6-.4-.4-.7L6 10.800c.3-.5.800-.8 1.400-.8z"/></svg>
<svg class="ic" style="left:728px;top:453px" width="22" height="22" viewBox="0 0 24 24"><path d="M19.350 10.040C18.670 6.590 15.640 4 12 4 9.110 4 6.600 5.640 5.350 8.040 2.340 8.360 0 10.910 0 14c0 3.310 2.690 6 6 6h13c2.760 0 5-2.240 5-5 0-2.640-2.050-4.780-4.650-4.960zM17 13l-5 5-5-5h3V9h4v4h3z"/></svg>
<svg class="ic" style="left:758px;top:452px" width="24" height="24" viewBox="0 0 24 24"><path d="M19 8l-4 4h3c0 3.310-2.690 6-6 6-1.010 0-1.970-.25-2.800-.7l-1.460 1.460C8.970 19.540 10.430 20 12 20c4.420 0 8-3.580 8-8h3l-4-4zM6 12c0-3.310 2.690-6 6-6 1.010 0 1.970.250 2.800.7l1.460-1.460C15.030 4.460 13.570 4 12 4c-4.420 0-8 3.580-8 8H1l4 4 4-4H6z"/></svg>
<svg class="ic" style="left:790px;top:452px" width="24" height="24" viewBox="0 0 24 24"><path d="M7 1h2v2h2V1h7v2h2V1h2v18h-2v-2h-2v2h-6.500c-.3-2.400-1.700-4.200-4.500-4.700V1zm2 4v2.500h2V5H9zm0 4.500V12h2V9.500H9zm9-4.500v2.500h2V5h-2zm0 4.500V12h2V9.500h-2zm0 4.500v2.500h2V14h-2z"/><path d="M6 15.200v-1.700l-2.400 2.300L6 18v-1.600c1.500 0 2.700 1.100 2.700 2.500 0 .4-.1.800-.3 1.200l.9.900c.4-.6.600-1.300.6-2.100 0-2.100-1.700-3.700-3.900-3.700zM6 21.400c-1.500 0-2.700-1.100-2.700-2.500 0-.4.100-.8.300-1.200l-.9-.9c-.4.600-.6 1.300-.6 2.100 0 2.100 1.700 3.700 3.900 3.700v1.700l2.400-2.300L6 19.800v1.600z"/></svg>
<svg class="ic" style="fill:none;left:821px;top:453px" width="22" height="22" viewBox="0 0 22 22" stroke="#535353"><rect x="8.300" y="2.800" width="11.700" height="8.200" rx="1.200" stroke-width="1.800"/><path d="M8 3.600h12" stroke-width="2.600"/><path d="M5 7v7.500h11.500" stroke-width="1.700"/><path d="M2 10.500v7.500h11.500" stroke-width="1.700"/></svg>
<!-- Data source group -->
<div class="grp" style="left:693px;top:489px;width:307px;height:57px"></div>
<div class="lbl mono" style="left:700px;top:485px">Data source</div>
<div class="a mono" style="left:697px;top:506px">Current file:</div>
<div class="a" style="left:805px;top:500px;width:190px;height:20px;background:#fff"></div>
<div class="a mono" style="left:807px;top:506px">Al_Rede-tension-300K.dump</div>
<div class="a mono" style="left:697px;top:527px">Directory:</div>
<div class="a" style="left:805px;top:522px;width:190px;height:20px;background:#fff"></div>
<div class="a mono" style="left:807px;top:527px">jects/LAMMPS/Al_Rede/LAMMPS-Cal</div>
<!-- File sequence group -->
<div class="grp" style="left:693px;top:557px;width:307px;height:52px"></div>
<div class="lbl mono" style="left:700px;top:552px">File sequence</div>
<div class="a mono" style="left:697px;top:573px">Search pattern:</div>
<div class="a" style="left:805px;top:568px;width:190px;height:20px;background:#fff;border:1px solid #7a7a7a"></div>
<div class="a mono" style="left:808px;top:573px">Al_Rede-tension-*K.dump</div>
<div class="a" style="left:698px;top:591px;width:13px;height:13px;border:1px solid #3a2048;background:#fff"></div>
<svg class="a" style="left:699px;top:592px" width="11" height="11" viewBox="0 0 11 11" fill="none" stroke="#222" stroke-width="1.200"><path d="M1.500 5.500L4.300 8.300 9.700 2.500"/></svg>
<div class="a mono" style="left:716px;top:593px">auto-generate</div>
<div class="a mono" style="left:805px;top:593px;color:#2a2a7a">Found 1 matching file</div>
<!-- Trajectory group -->
<div class="grp" style="left:693px;top:621px;width:307px;height:75px"></div>
<div class="lbl mono" style="left:700px;top:617px">Trajectory</div>
<div class="a mono" style="left:697px;top:638px">Current frame:</div>
<div class="a" style="left:805px;top:632px;width:190px;height:21px;background:#e1e1e1;border:1px solid #adadad"></div>
<div class="a mono" style="left:808px;top:638px">Timestep 9000</div>
<svg class="a" style="left:979px;top:639px" width="12" height="8" viewBox="0 0 12 8" fill="none" stroke="#444" stroke-width="1.200"><path d="M1.500 1.500L6 6 10.500 1.500"/></svg>
<div class="a mono" style="left:805px;top:656px;color:#2a2a7a">Showing frame 10 of 21</div>
<div class="a mono" style="left:697px;top:676px">Playback ratio:</div>
<div class="a mono" style="left:805px;top:676px">1 / 1</div>
<div class="a" style="left:921px;top:671px;width:73px;height:20px;background:#e1e1e1;border:1px solid #adadad"></div>
<div class="a mono" style="left:921px;top:676px;width:73px;text-align:center">Change...</div>
<!-- Status group -->
<div class="grp" style="left:693px;top:707px;width:307px;height:60px"></div>
<div class="lbl mono" style="left:700px;top:702px">Status</div>
<div class="a" style="left:698px;top:717px;width:297px;height:40px;background:#fff;border:1px solid #828790"></div>
<div class="a mono" style="left:706px;top:720px">4000 particles at timestep 8000</div>
<!-- bottom: tabs -->
<div class="a" style="left:219px;top:665px;width:79px;height:21px;background:#fff;border:1px solid #e2e2e2;border-bottom:none"></div>
<div class="a mono" style="left:218px;top:670px;width:79px;text-align:center">Particles</div>
<div class="a" style="left:297px;top:668px;width:124px;height:17px;border:1px solid #d9d9d9;border-bottom:none"></div>
<div class="a mono" style="left:297px;top:671px;width:124px;text-align:center">Global Attributes</div>
<svg class="a" style="left:666px;top:672px" width="10" height="7" viewBox="0 0 10 7" fill="none" stroke="#555" stroke-width="1.300"><path d="M1 5.500L5 1.500 9 5.500"/></svg>
<div class="a" style="left:0;top:689px;width:683px;height:1px;background:#a0a0a0"></div>
<div class="a" style="left:434px;top:690px;width:1px;height:60px;background:#8a8a8a"></div>
<div class="a" style="left:594px;top:690px;width:1px;height:60px;background:#8a8a8a"></div>
<!-- timeline -->
<div class="tk" style="left:38px"></div>
<div class="tn" style="left:29px">0</div>
<div class="tk" style="left:56px"></div>
<div class="tn" style="left:46px">1</div>
<div class="tk" style="left:74px"></div>
<div class="tn" style="left:64px">2</div>
<div class="tk" style="left:91px"></div>
<div class="tn" style="left:82px">3</div>
<div class="tk" style="left:109px"></div>
<div class="tn" style="left:100px">4</div>
<div class="tk" style="left:127px"></div>
<div class="tn" style="left:117px">5</div>
<div class="tk" style="left:144px"></div>
<div class="tn" style="left:135px">6</div>
<div class="tk" style="left:162px"></div>
<div class="tk" style="left:180px"></div>
<div class="tk" style="left:198px"></div>
<div class="tk" style="left:215px"></div>
<div class="tk" style="left:233px"></div>
<div class="tk" style="left:251px"></div>
<div class="tn" style="left:241px">12</div>
<div class="tk" style="left:268px"></div>
<div class="tn" style="left:259px">13</div>
<div class="tk" style="left:286px"></div>
<div class="tn" style="left:277px">14</div>
<div class="tk" style="left:304px"></div>
<div class="tn" style="left:294px">15</div>
<div class="tk" style="left:322px"></div>
<div class="tn" style="left:312px">16</div>
<div class="tk" style="left:339px"></div>
<div class="tn" style="left:330px">17</div>
<div class="tk" style="left:357px"></div>
<div class="tn" style="left:347px">18</div>
<div class="tk" style="left:375px"></div>
<div class="tn" style="left:365px">19</div>
<div class="tk" style="left:392px"></div>
<div class="tn" style="left:383px">20</div>
<div class="a" style="left:158px;top:693px;width:80px;height:16px;background:#e1e1e1;border:1px solid #f6f6f6;border-right-color:#6d6d6d;border-bottom-color:#6d6d6d"></div>
<div class="a" style="left:158px;top:694px;width:80px;text-align:center;font-size:12px;line-height:14px;word-spacing:2px">9 / 20</div>
<svg class="a" style="left:193px;top:709px" width="10" height="5" viewBox="0 0 10 5"><path d="M0.500 0H9.500L5 4.500z" fill="#000"/></svg>
<!-- playback controls -->
<svg class="ic" style="left:438px;top:694px" width="24" height="24" viewBox="0 0 24 24"><path d="M6 6h2v12H6zm3.500 6l8.500 6V6z"/></svg>
<div class="sep" style="left:467px;top:695px;height:23px"></div>
<svg class="ic" style="left:473px;top:694px" width="24" height="24" viewBox="0 0 24 24"><path d="M11 18V6l-8.500 6 8.500 6zm.5-6l8.500 6V6l-8.500 6z"/></svg>
<div class="a" style="left:500px;top:692px;width:29px;height:28px;background:#c4def5;border:1px solid #8cc0f2"></div>
<svg class="ic" style="left:503px;top:695px" width="24" height="24" viewBox="0 0 24 24"><path d="M8 5v14l11-7z"/></svg>
<svg class="ic" style="left:532px;top:694px" width="24" height="24" viewBox="0 0 24 24"><path d="M4 18l8.500-6L4 6v12zm9-12v12l8.500-6L13 6z"/></svg>
<div class="sep" style="left:560px;top:695px;height:23px"></div>
<svg class="ic" style="left:566px;top:694px" width="24" height="24" viewBox="0 0 24 24"><path d="M6 18l8.500-6L6 6v12zM16 6v12h2V6h-2z"/></svg>
<svg class="ic" style="left:598px;top:694px" width="24" height="24" viewBox="0 0 24 24"><path d="M15.500 14h-.79l-.28-.27C15.410 12.590 16 11.110 16 9.500 16 5.910 13.090 3 9.500 3S3 5.910 3 9.500 5.910 16 9.500 16c1.610 0 3.090-.59 4.230-1.570l.27.280v.79l5 4.990L20.490 19l-4.990-5zm-6 0C7.010 14 5 11.990 5 9.500S7.010 5 9.500 5 14 7.010 14 9.500 11.990 14 9.500 14z"/></svg>
<svg class="ic" style="left:629px;top:697px" width="19" height="19" viewBox="0 0 24 24"><path d="M23 5.500V20c0 2.200-1.800 4-4 4h-7.300c-1.080 0-2.100-.43-2.850-1.190L1 14.830s1.260-1.230 1.300-1.250c.22-.19.490-.29.790-.29.220 0 .42.060.6.160.04.010 4.310 2.460 4.310 2.460V4c0-.83.670-1.500 1.500-1.500S11 3.170 11 4v7h1V1.500c0-.83.670-1.500 1.500-1.500S15 .67 15 1.500V11h1V2.500c0-.83.670-1.500 1.500-1.500s1.500.67 1.500 1.500V11h1V5.500c0-.83.670-1.500 1.500-1.500s1.500.67 1.500 1.500z"/></svg>
<svg class="a" style="left:656px;top:697px" width="24" height="16" viewBox="0 0 24 16" fill="none" stroke="#535353" stroke-width="1.300"><ellipse cx="12" cy="8" rx="10.500" ry="5.500"/><circle cx="12" cy="8" r="3" fill="#535353"/><path d="M4.500 2.200l2.600.4-1.300 2.100z" fill="#535353" stroke="none"/><path d="M19.500 13.800l-2.600-.4 1.300-2.100z" fill="#535353" stroke="none"/></svg>
<!-- row 2 -->
<svg class="ic" style="left:440px;top:726px" width="20" height="20" viewBox="0 0 24 24"><path d="M12.650 10C11.830 7.670 9.610 6 7 6c-3.310 0-6 2.690-6 6s2.690 6 6 6c2.610 0 4.830-1.670 5.650-4H17v4h4v-4h2v-4H12.650zM7 14c-1.100 0-2-.9-2-2s.9-2 2-2 2 .9 2 2-.9 2-2 2z"/></svg>
<div class="a" style="left:465px;top:726px;width:83px;height:18px;background:#fff;border:1px solid #7a7a7a"></div>
<div class="a" style="left:468px;top:728px;font-size:12px;line-height:14px">9</div>
<div class="a" style="left:548px;top:726px;width:16px;height:18px;background:#d6e5f3"></div>
<div class="a" style="left:548px;top:735px;width:16px;height:1px;background:#f0f0f0"></div>
<svg class="a" style="left:552px;top:728px" width="9" height="14" viewBox="0 0 9 14"><path d="M0.500 5L4.500 1 8.500 5zM0.500 9L4.500 13 8.500 9z" fill="#111"/></svg>
<svg class="ic" style="left:568px;top:725px" width="20" height="20" viewBox="0 0 24 24"><path d="M11.990 2C6.470 2 2 6.480 2 12s4.470 10 9.990 10C17.520 22 22 17.520 22 12S17.520 2 11.990 2zM12 20.500c-4.700 0-8.500-3.800-8.500-8.500S7.300 3.500 12 3.500s8.500 3.800 8.500 8.500-3.800 8.500-8.500 8.500zm.5-13.500H11v6l5.250 3.150.75-1.230-4.500-2.670z"/></svg>
<svg class="a" style="left:598px;top:723px" width="24" height="24" viewBox="0 0 24 24" fill="none" stroke="#535353" stroke-width="1.200"><path d="M1.500 5V1.500H5M19 1.500h3.500V5M22.500 19v3.500H19M5 22.500H1.500V19"/><path d="M12 4.500L4.500 8v8.500L12 20l7.500-3.500V8z" fill="#535353" stroke="none"/><path d="M12.800 12.200l5.200-2.400v5.700l-5.200 2.400z" fill="#f0f0f0" stroke="none"/><path d="M5.800 8.300L12 11.200l6.200-2.900" stroke="#f0f0f0" stroke-width="1"/></svg>
<svg class="a" style="left:629px;top:724px" width="20" height="22" viewBox="0 0 20 22" fill="none" stroke="#535353" stroke-width="1.600"><path d="M2.500 2L18 10.500 2.500 20"/><path d="M9.300 6.500c-2.400 2-2.400 6.500 0 9" stroke-width="1"/></svg>
<svg class="ic" style="left:657px;top:724px" width="22" height="22" viewBox="0 0 24 24"><path d="M15 3l2.300 2.300-2.890 2.870 1.420 1.420L18.700 6.700 21 9V3zM3 9l2.300-2.300 2.870 2.890 1.420-1.420L6.700 5.300 9 3H3zm6 12l-2.300-2.300 2.890-2.870-1.420-1.420L5.300 17.300 3 15v6zm12-6l-2.300 2.300-2.870-2.890-1.420 1.420 2.890 2.870L15 21h6z"/></svg>
</body></html>
